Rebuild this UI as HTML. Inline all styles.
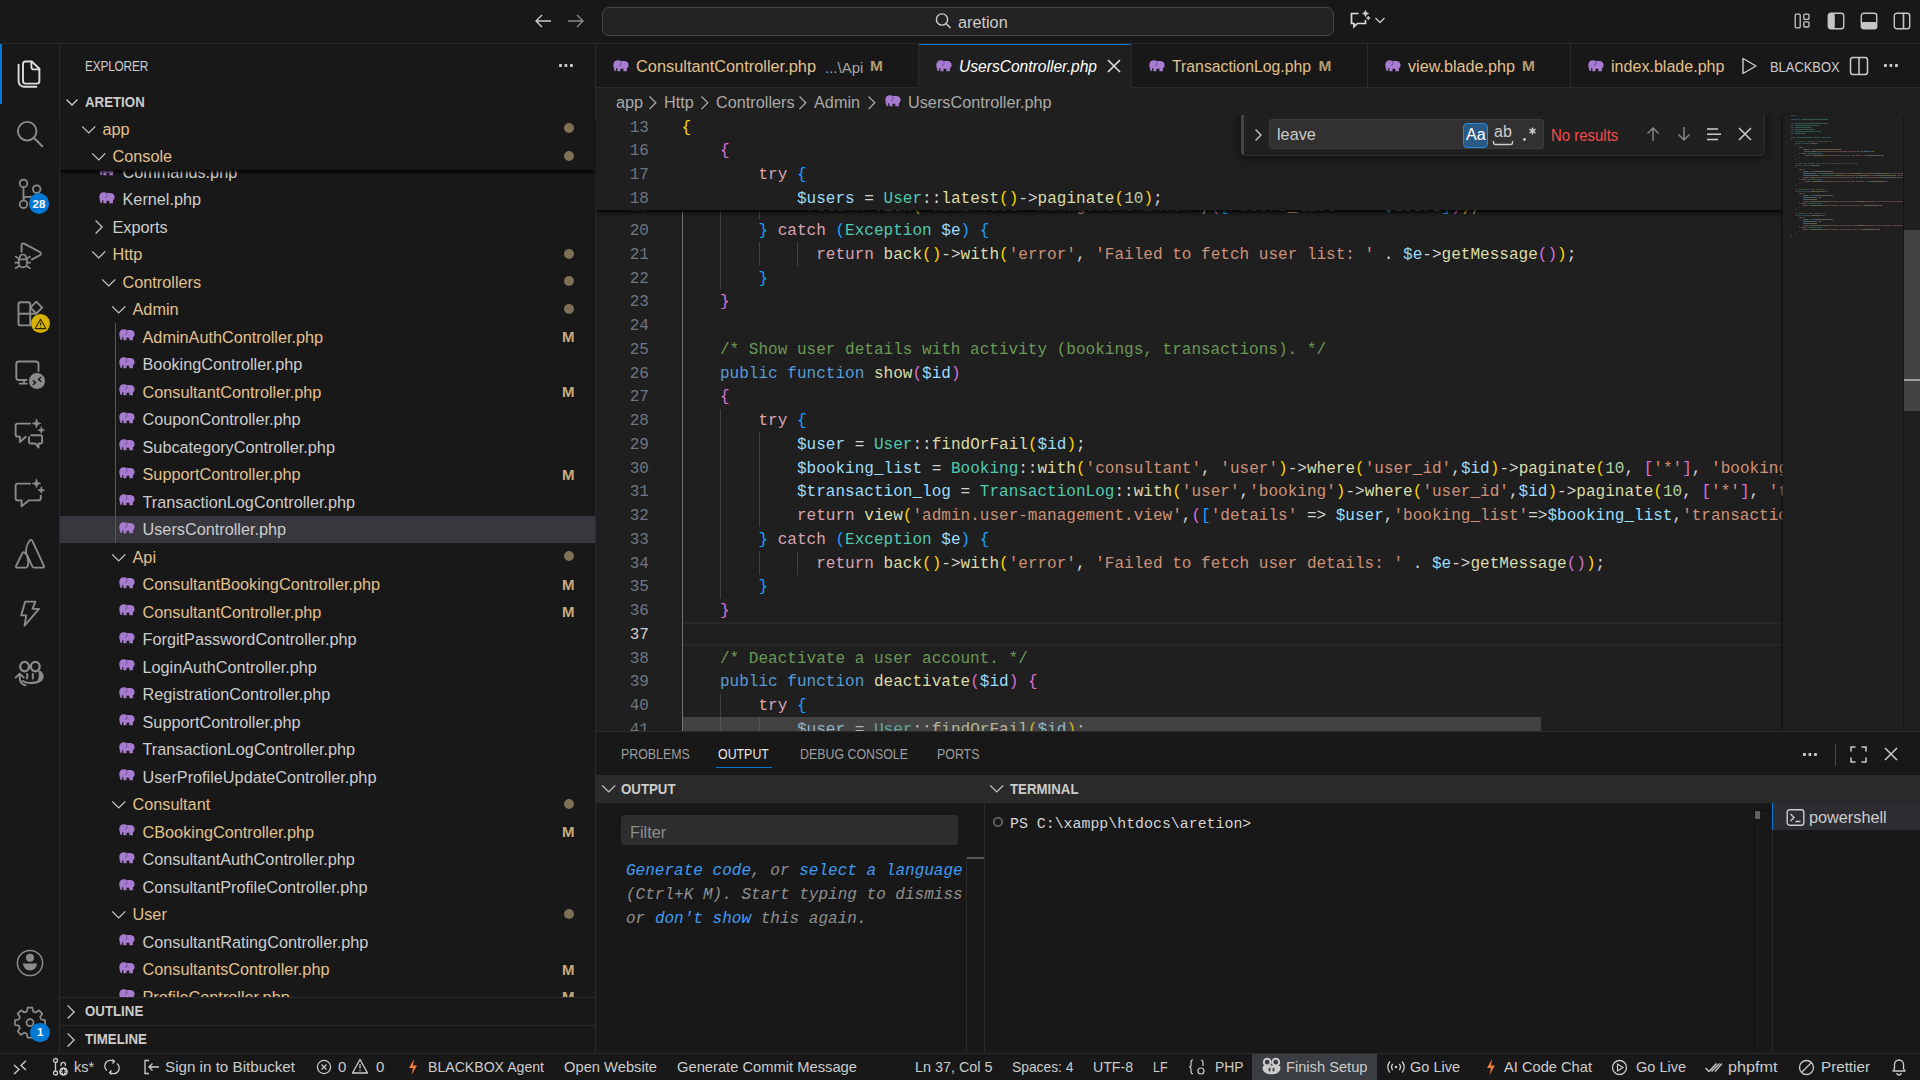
<!DOCTYPE html>
<html><head><meta charset="utf-8"><title>VS Code</title><style>
*{box-sizing:content-box}
html,body{margin:0;padding:0}
body{width:1920px;height:1080px;overflow:hidden;background:#181818;font-family:"Liberation Sans",sans-serif;color:#cccccc;position:relative}
.a{position:absolute}
.t{white-space:pre;line-height:normal}
.tr{font-size:16.25px;line-height:27.5px}
.ele{display:block}
.badge{border-radius:50%;display:flex;align-items:center;justify-content:center;font-family:"Liberation Sans",sans-serif}
.dots3{width:14px;height:3px;background:radial-gradient(circle at 1.5px 1.5px,#cccccc 1.4px,transparent 1.6px) 0 0/5.5px 3px repeat-x}
.ln{left:596px;width:53px;text-align:right;font-family:"Liberation Mono",monospace;font-size:16.04px;line-height:23.75px;white-space:pre}
.code{font-family:"Liberation Mono",monospace;font-size:16.04px;line-height:23.75px;white-space:pre;color:#d4d4d4}
.it{font-style:italic}
.ptab{font-size:13.75px;transform:scaleX(0.9);transform-origin:left}
.sbt{font-size:15px}
</style></head><body>
<div class="a" style="left:0;top:0;width:1920px;height:43px;background:#181818;border-bottom:1px solid #2b2b2b"></div>
<svg class="a" style="left:533px;top:12px" width="20" height="18" viewBox="0 0 20 18"><path d="M18 9H3M9 3L3 9l6 6" fill="none" stroke="#cccccc" stroke-width="1.4"/></svg>
<svg class="a" style="left:566px;top:12px" width="20" height="18" viewBox="0 0 20 18"><path d="M2 9h15M11 3l6 6-6 6" fill="none" stroke="#8a8a8a" stroke-width="1.4"/></svg>
<div class="a" style="left:602px;top:7px;width:730px;height:27px;border:1px solid #464646;border-radius:7px;background:#232323"></div>
<svg class="a" style="left:934px;top:12px" width="18" height="18" viewBox="0 0 18 18"><circle cx="8" cy="7.5" r="5.6" fill="none" stroke="#cccccc" stroke-width="1.4"/><path d="M12 11.5l4.5 4.5" stroke="#cccccc" stroke-width="1.5"/></svg>
<div class="a t" style="left:958px;top:13px;font-size:16.25px;color:#cccccc">aretion</div>
<svg class="a" style="left:1348px;top:9px" width="24" height="24" viewBox="0 0 24 24"><path d="M10.5 4.5H3.5v10h2.5v3.2l3.4-3.2h8.1v-3.5" fill="none" stroke="#dddddd" stroke-width="1.7"/><path d="M17.5 1.5l0.9 2.1 2.1 0.9-2.1 0.9-0.9 2.1-0.9-2.1-2.1-0.9 2.1-0.9z M20.3 7l0.6 1.4 1.4 0.6-1.4 0.6-0.6 1.4-0.6-1.4-1.4-0.6 1.4-0.6z" fill="#cccccc" stroke="#cccccc" stroke-width="0.8"/></svg>
<svg class="a" style="left:1374px;top:15px" width="12" height="10" viewBox="0 0 12 10"><path d="M1.5 3l4.5 4.5L10.5 3" fill="none" stroke="#cccccc" stroke-width="1.3"/></svg>
<svg class="a" style="left:1794px;top:13px" width="18" height="16" viewBox="0 0 18 16"><rect x="1.2" y="1.2" width="5" height="13.6" rx="1" fill="none" stroke="#c5c5c5" stroke-width="1.3"/><rect x="9.8" y="1.2" width="5.2" height="5.2" rx="1" fill="none" stroke="#c5c5c5" stroke-width="1.3"/><rect x="9.8" y="8.8" width="5.2" height="5.2" rx="1" fill="none" stroke="#c5c5c5" stroke-width="1.3"/></svg>
<svg class="a" style="left:1827px;top:12px" width="18" height="18" viewBox="0 0 18 18"><rect x="1.3" y="1.3" width="15.4" height="15.4" rx="2.5" fill="none" stroke="#c5c5c5" stroke-width="1.4"/><rect x="1.3" y="1.3" width="6.5" height="15.4" rx="2" fill="#c5c5c5"/></svg>
<svg class="a" style="left:1860px;top:12px" width="18" height="18" viewBox="0 0 18 18"><rect x="1.3" y="1.3" width="15.4" height="15.4" rx="2.5" fill="none" stroke="#c5c5c5" stroke-width="1.4"/><rect x="1.3" y="10" width="15.4" height="6.7" rx="2" fill="#c5c5c5"/></svg>
<svg class="a" style="left:1893px;top:12px" width="18" height="18" viewBox="0 0 18 18"><rect x="1.3" y="1.3" width="15.4" height="15.4" rx="2.5" fill="none" stroke="#c5c5c5" stroke-width="1.4"/><path d="M10.5 1.3v15.4" stroke="#c5c5c5" stroke-width="1.6"/></svg>
<div class="a" style="left:0;top:44px;width:59px;height:1009px;background:#181818;border-right:1px solid #2b2b2b"></div>
<div class="a" style="left:0;top:44px;width:2px;height:60px;background:#0078d4"></div>
<svg class="a" style="left:10px;top:55px" width="40" height="40" viewBox="0 0 40 40" fill="none" stroke-linecap="round" stroke-linejoin="round"><path d="M15 6.5H21.8L29.4 13.8V26A2.6 2.6 0 0 1 26.8 28.6H15.6A2.6 2.6 0 0 1 13 26V9A2.5 2.5 0 0 1 15 6.5Z" stroke="#dcdcdc" stroke-width="1.9"/><path d="M21.4 6.8V12.2A2.2 2.2 0 0 0 23.6 14.4H29.2" stroke="#dcdcdc" stroke-width="1.9"/><path d="M8.6 9.6V26.2A5.6 5.6 0 0 0 14.2 31.8H26.4" stroke="#dcdcdc" stroke-width="1.9"/></svg>
<svg class="a" style="left:10px;top:115px" width="40" height="40" viewBox="0 0 40 40" fill="none" stroke-linecap="round" stroke-linejoin="round"><circle cx="17.2" cy="16.2" r="9.3" stroke="#8b8b8b" stroke-width="1.9"/><path d="M24 23L32.3 31.3" stroke="#8b8b8b" stroke-width="2"/></svg>
<svg class="a" style="left:10px;top:175px" width="40" height="40" viewBox="0 0 40 40" fill="none" stroke-linecap="round" stroke-linejoin="round"><circle cx="13.5" cy="8.4" r="3.8" stroke="#8b8b8b" stroke-width="1.8"/><circle cx="26.7" cy="14.1" r="3.8" stroke="#8b8b8b" stroke-width="1.8"/><circle cx="13.5" cy="29.2" r="3.8" stroke="#8b8b8b" stroke-width="1.8"/><path d="M13.5 12.2V25.4M13.5 24.5C13.5 22.6 14.8 21.8 16.8 21.8H21" stroke="#8b8b8b" stroke-width="1.8"/></svg>
<svg class="a" style="left:10px;top:235px" width="40" height="40" viewBox="0 0 40 40" fill="none" stroke-linecap="round" stroke-linejoin="round"><path d="M11.6 16.8V10.4C11.6 8.6 12.8 8 14.2 8.7L29.8 17C31.2 17.8 31.2 19.4 29.8 20.2L21.8 24.6" stroke="#8b8b8b" stroke-width="1.9"/><path d="M8.7 24.3H17M9.8 22.6A3.1 3.1 0 0 1 16 22.6M8.8 24.5V28.3A4.1 4.1 0 0 0 17 28.3V24.5M5.6 21.6L8.7 23.4M5.3 27.7H8.7M5.6 33.2L9.2 31M20 21.6L17 23.4M20.2 27.7H17M20 33.2L16.6 31" stroke="#8b8b8b" stroke-width="1.7"/></svg>
<svg class="a" style="left:10px;top:295px" width="40" height="40" viewBox="0 0 40 40" fill="none" stroke-linecap="round" stroke-linejoin="round"><path d="M10.5 7.2H18.2A2 2 0 0 1 20.2 9.2V30.4H10.5A2 2 0 0 1 8.5 28.4V9.2A2 2 0 0 1 10.5 7.2ZM8.5 18.8H26M20.2 18.8V30.4" stroke="#8b8b8b" stroke-width="1.9"/><path d="M26.3 6.6L32.2 12.6L26.3 18.5L20.4 12.6Z" stroke="#8b8b8b" stroke-width="1.9"/></svg>
<svg class="a" style="left:10px;top:355px" width="40" height="40" viewBox="0 0 40 40" fill="none" stroke-linecap="round" stroke-linejoin="round"><path d="M16.5 25H8.8A2.5 2.5 0 0 1 6.3 22.5V9A2.5 2.5 0 0 1 8.8 6.5H26A2.5 2.5 0 0 1 28.5 9V16M14 25.2V28.6M9.6 28.6H17" stroke="#8b8b8b" stroke-width="1.9"/></svg>
<svg class="a" style="left:10px;top:415px" width="40" height="40" viewBox="0 0 40 40" fill="none" stroke-linecap="round" stroke-linejoin="round"><path d="M20.2 8.6H7.8A2.2 2.2 0 0 0 5.6 10.8V19.4A2.2 2.2 0 0 0 7.8 21.6H9.9V27L15.8 21.8" stroke="#8b8b8b" stroke-width="1.9"/><path d="M21.2 20.3H30.6A1.5 1.5 0 0 1 32.1 21.8V27A1.5 1.5 0 0 1 30.6 28.5H28.5V32.6L25.4 28.5H20.5A1.5 1.5 0 0 1 19 27V22.3" stroke="#8b8b8b" stroke-width="1.9"/><path d="M26.5 4.2L27.6 7.4L30.8 8.5L27.6 9.6L26.5 12.8L25.4 9.6L22.2 8.5L25.4 7.4ZM31.3 11.9L32.1 14.3L34.5 15.2L32.1 16L31.3 18.4L30.5 16L28.1 15.2L30.5 14.3Z" fill="#8b8b8b" stroke="#8b8b8b" stroke-width="0.8"/></svg>
<svg class="a" style="left:10px;top:475px" width="40" height="40" viewBox="0 0 40 40" fill="none" stroke-linecap="round" stroke-linejoin="round"><path d="M20.2 8.6H7.8A2.2 2.2 0 0 0 5.6 10.8V23.2A2.2 2.2 0 0 0 7.8 25.4H11.6V31.2L18.6 25.4H28.6A2.2 2.2 0 0 0 30.8 23.2V20.6" stroke="#8b8b8b" stroke-width="1.9"/><path d="M26.5 4.2L27.6 7.4L30.8 8.5L27.6 9.6L26.5 12.8L25.4 9.6L22.2 8.5L25.4 7.4ZM31.3 11.9L32.1 14.3L34.5 15.2L32.1 16L31.3 18.4L30.5 16L28.1 15.2L30.5 14.3Z" fill="#8b8b8b" stroke="#8b8b8b" stroke-width="0.8"/></svg>
<svg class="a" style="left:10px;top:535px" width="40" height="40" viewBox="0 0 40 40" fill="none" stroke-linecap="round" stroke-linejoin="round"><path d="M20 5.2C21.2 4.4 22 5.2 22.6 6.4L34 31C34.4 32 33.8 32.6 32.8 32.6H24C23.2 32.6 22.7 32.2 22.3 31.4L17.3 20.4M20 5.2C16.2 10 15 16.5 17.5 22.8C18.6 25.8 18.8 28.6 17.6 31.4C17.2 32.2 16.6 32.6 15.8 32.6H7C6 32.6 5.5 31.8 6 31L12.5 18C13.2 16.8 14.2 16.8 14.9 18L17.3 20.4" stroke="#8b8b8b" stroke-width="1.8"/></svg>
<svg class="a" style="left:10px;top:595px" width="40" height="40" viewBox="0 0 40 40" fill="none" stroke-linecap="round" stroke-linejoin="round"><path d="M15.2 6.6H25.4L22.6 13.9H29L14.6 30.6L16.2 20.4H11.2Z" stroke="#8b8b8b" stroke-width="1.9"/></svg>
<svg class="a" style="left:10px;top:655px" width="40" height="40" viewBox="0 0 40 40" fill="none" stroke-linecap="round" stroke-linejoin="round"><ellipse cx="14.6" cy="11.6" rx="4.4" ry="4.7" stroke="#8b8b8b" stroke-width="2.3"/><ellipse cx="25.3" cy="11.6" rx="4.4" ry="4.7" stroke="#8b8b8b" stroke-width="2.3"/><path d="M12.8 26C15.5 27.8 20.5 28.4 25 27.6C29.5 26.8 32.6 24.4 32.6 21.2C32.6 19.2 31.4 17.6 29.6 16.6" stroke="#8b8b8b" stroke-width="2.1"/><path d="M28.6 16.4C31.6 17.2 33.2 19 33.2 21.3C33.2 24.6 30.2 26.9 25.6 27.7C28.2 25.6 29.4 22 28.6 16.4Z" fill="#8b8b8b" stroke="none"/><path d="M17.2 19V23.4M22.8 19V23.4" stroke="#8b8b8b" stroke-width="2"/><path d="M15.6 30.4C11.6 29.6 9.7 26.6 9.7 22.6V18.8M5.6 22.6L9.7 18.6L13.8 22.6" stroke="#8b8b8b" stroke-width="1.9"/></svg>
<svg class="a" style="left:10px;top:943px" width="40" height="40" viewBox="0 0 40 40" fill="none" stroke-linecap="round" stroke-linejoin="round"><circle cx="20" cy="20" r="12.6" stroke="#8b8b8b" stroke-width="1.5"/><circle cx="20" cy="14.8" r="4" fill="#8b8b8b" stroke="none"/><path d="M13 20.6H27A7 7 0 0 1 13 20.6Z" fill="#8b8b8b" stroke="none"/></svg>
<svg class="a" style="left:10px;top:1003px" width="40" height="40" viewBox="0 0 40 40" fill="none" stroke-linecap="round" stroke-linejoin="round"><path d="M17.6 4.6H22.4L23.1 8.4L25.7 9.5L28.9 7.3L32.3 10.7L30.1 13.9L31.2 16.5L35 17.2V22L31.2 22.7L30.1 25.3L32.3 28.5L28.9 31.9L25.7 29.7L23.1 30.8L22.4 34.6H17.6L16.9 30.8L14.3 29.7L11.1 31.9L7.7 28.5L9.9 25.3L8.8 22.7L5 22V17.2L8.8 16.5L9.9 13.9L7.7 10.7L11.1 7.3L14.3 9.5L16.9 8.4Z" stroke="#8b8b8b" stroke-width="1.7"/><circle cx="20" cy="19.6" r="3.5" stroke="#8b8b8b" stroke-width="1.7"/></svg>
<div class="a badge" style="left:28.5px;top:193.3px;width:20.8px;height:20.8px;background:#0078d4;color:#fff;font-weight:bold;font-size:11.5px">28</div>
<div class="a badge" style="left:30.5px;top:314px;width:19px;height:19px;background:#d6b100"><svg width="13" height="12" viewBox="0 0 13 12"><path d="M6.5 1.3L11.8 10.6H1.2Z" fill="none" stroke="#2a2400" stroke-width="1.1" stroke-linejoin="round"/><path d="M6.5 4.6V7.6M6.5 8.8V9.4" stroke="#2a2400" stroke-width="1.1"/></svg></div>
<div class="a badge" style="left:28px;top:372px;width:16.4px;height:16.4px;background:#8b8b8b;border:1.5px solid #181818"><svg width="12" height="10" viewBox="0 0 12 10"><path d="M1.8 4.2L4.6 6.6L1.8 9M10.2 1L7.4 3.4L10.2 5.8" stroke="#181818" stroke-width="1.4" fill="none"/></svg></div>
<div class="a badge" style="left:30.4px;top:1022.7px;width:19.4px;height:19.4px;background:#0078d4;color:#fff;font-weight:bold;font-size:11.5px">1</div>
<div class="a" style="left:60px;top:44px;width:535px;height:1009px;background:#181818;border-right:1px solid #2b2b2b"></div>
<div class="a t" style="left:85px;top:59px;font-size:13.75px;color:#cccccc;letter-spacing:-0.2px;transform:scaleX(0.86);transform-origin:left">EXPLORER</div>
<div class="a dots3" style="left:559px;top:64px"></div>
<svg class="a chev" style="left:64px;top:94px" width="16" height="16" viewBox="0 0 16 16"><path d="M2.5 5.5l5.5 5.5 5.5-5.5" fill="none" stroke="#cccccc" stroke-width="1.3"/></svg>
<div class="a t" style="left:85px;top:94.5px;font-size:13.75px;font-weight:bold;color:#cccccc;transform:scaleX(0.965);transform-origin:left">ARETION</div>
<div class="a" style="left:0;top:115px;width:596px;height:882.5px;overflow:hidden"><div class="a" style="left:0;top:-115px;width:596px;height:1100px"><div class="a" style="left:99.0px;top:164.4px"><svg class="ele" width="16" height="12" viewBox="0 0 16 12"><path fill="#a77bd0" d="M4.8 0.2C2.2 0.2 0.3 2.2 0.3 4.8C0.3 6.6 0.8 8.2 1.2 9.4L1.4 10.4C1.5 11 2.4 11.2 2.8 10.7L3.2 10.1V8.1L4.4 8.4V11.2H7.5V8.7H10.3V11.2H13.9V8.5C15 7.8 15.6 6.5 15.6 5C15.6 2.6 13.6 1 11.2 1H8C7.2 0.5 6 0.2 4.8 0.2Z"/><path fill="none" stroke="#5f4288" stroke-width="0.8" d="M7.6 1.2C8.4 2.8 8 5 6 5.8"/></svg></div><div class="a t tr" style="left:122.5px;top:158.8px;color:#cccccc">Commands.php</div><div class="a" style="left:99.0px;top:191.9px"><svg class="ele" width="16" height="12" viewBox="0 0 16 12"><path fill="#a77bd0" d="M4.8 0.2C2.2 0.2 0.3 2.2 0.3 4.8C0.3 6.6 0.8 8.2 1.2 9.4L1.4 10.4C1.5 11 2.4 11.2 2.8 10.7L3.2 10.1V8.1L4.4 8.4V11.2H7.5V8.7H10.3V11.2H13.9V8.5C15 7.8 15.6 6.5 15.6 5C15.6 2.6 13.6 1 11.2 1H8C7.2 0.5 6 0.2 4.8 0.2Z"/><path fill="none" stroke="#5f4288" stroke-width="0.8" d="M7.6 1.2C8.4 2.8 8 5 6 5.8"/></svg></div><div class="a t tr" style="left:122.5px;top:186.3px;color:#cccccc">Kernel.php</div><svg class="a" style="left:93.7px;top:219.0px" width="10" height="16" viewBox="0 0 10 16"><path d="M1.6 1.4L8.1 7.95L1.6 14.5" fill="none" stroke="#c5c5c5" stroke-width="1.3"/></svg><div class="a t tr" style="left:112.5px;top:213.8px;color:#cccccc">Exports</div><svg class="a" style="left:90.5px;top:250.0px" width="16" height="10" viewBox="0 0 16 10"><path d="M1.2 1.4L7.75 7.9L14.3 1.4" fill="none" stroke="#c5c5c5" stroke-width="1.3"/></svg><div class="a t tr" style="left:112.5px;top:241.3px;color:#e2c08d">Http</div><div class="a" style="left:563.5px;top:248.5px;width:10px;height:10px;border-radius:50%;background:#7f6f54"></div><svg class="a" style="left:100.5px;top:277.5px" width="16" height="10" viewBox="0 0 16 10"><path d="M1.2 1.4L7.75 7.9L14.3 1.4" fill="none" stroke="#c5c5c5" stroke-width="1.3"/></svg><div class="a t tr" style="left:122.5px;top:268.8px;color:#e2c08d">Controllers</div><div class="a" style="left:563.5px;top:276.0px;width:10px;height:10px;border-radius:50%;background:#7f6f54"></div><svg class="a" style="left:110.5px;top:305.0px" width="16" height="10" viewBox="0 0 16 10"><path d="M1.2 1.4L7.75 7.9L14.3 1.4" fill="none" stroke="#c5c5c5" stroke-width="1.3"/></svg><div class="a t tr" style="left:132.5px;top:296.3px;color:#e2c08d">Admin</div><div class="a" style="left:563.5px;top:303.5px;width:10px;height:10px;border-radius:50%;background:#7f6f54"></div><div class="a" style="left:119.0px;top:329.4px"><svg class="ele" width="16" height="12" viewBox="0 0 16 12"><path fill="#a77bd0" d="M4.8 0.2C2.2 0.2 0.3 2.2 0.3 4.8C0.3 6.6 0.8 8.2 1.2 9.4L1.4 10.4C1.5 11 2.4 11.2 2.8 10.7L3.2 10.1V8.1L4.4 8.4V11.2H7.5V8.7H10.3V11.2H13.9V8.5C15 7.8 15.6 6.5 15.6 5C15.6 2.6 13.6 1 11.2 1H8C7.2 0.5 6 0.2 4.8 0.2Z"/><path fill="none" stroke="#5f4288" stroke-width="0.8" d="M7.6 1.2C8.4 2.8 8 5 6 5.8"/></svg></div><div class="a t tr" style="left:142.5px;top:323.8px;color:#e2c08d">AdminAuthController.php</div><div class="a t tr" style="left:562px;top:323.0px;color:#c9ab7c;font-weight:bold;font-size:15px">M</div><div class="a" style="left:119.0px;top:356.9px"><svg class="ele" width="16" height="12" viewBox="0 0 16 12"><path fill="#a77bd0" d="M4.8 0.2C2.2 0.2 0.3 2.2 0.3 4.8C0.3 6.6 0.8 8.2 1.2 9.4L1.4 10.4C1.5 11 2.4 11.2 2.8 10.7L3.2 10.1V8.1L4.4 8.4V11.2H7.5V8.7H10.3V11.2H13.9V8.5C15 7.8 15.6 6.5 15.6 5C15.6 2.6 13.6 1 11.2 1H8C7.2 0.5 6 0.2 4.8 0.2Z"/><path fill="none" stroke="#5f4288" stroke-width="0.8" d="M7.6 1.2C8.4 2.8 8 5 6 5.8"/></svg></div><div class="a t tr" style="left:142.5px;top:351.3px;color:#cccccc">BookingController.php</div><div class="a" style="left:119.0px;top:384.4px"><svg class="ele" width="16" height="12" viewBox="0 0 16 12"><path fill="#a77bd0" d="M4.8 0.2C2.2 0.2 0.3 2.2 0.3 4.8C0.3 6.6 0.8 8.2 1.2 9.4L1.4 10.4C1.5 11 2.4 11.2 2.8 10.7L3.2 10.1V8.1L4.4 8.4V11.2H7.5V8.7H10.3V11.2H13.9V8.5C15 7.8 15.6 6.5 15.6 5C15.6 2.6 13.6 1 11.2 1H8C7.2 0.5 6 0.2 4.8 0.2Z"/><path fill="none" stroke="#5f4288" stroke-width="0.8" d="M7.6 1.2C8.4 2.8 8 5 6 5.8"/></svg></div><div class="a t tr" style="left:142.5px;top:378.8px;color:#e2c08d">ConsultantController.php</div><div class="a t tr" style="left:562px;top:378.0px;color:#c9ab7c;font-weight:bold;font-size:15px">M</div><div class="a" style="left:119.0px;top:411.9px"><svg class="ele" width="16" height="12" viewBox="0 0 16 12"><path fill="#a77bd0" d="M4.8 0.2C2.2 0.2 0.3 2.2 0.3 4.8C0.3 6.6 0.8 8.2 1.2 9.4L1.4 10.4C1.5 11 2.4 11.2 2.8 10.7L3.2 10.1V8.1L4.4 8.4V11.2H7.5V8.7H10.3V11.2H13.9V8.5C15 7.8 15.6 6.5 15.6 5C15.6 2.6 13.6 1 11.2 1H8C7.2 0.5 6 0.2 4.8 0.2Z"/><path fill="none" stroke="#5f4288" stroke-width="0.8" d="M7.6 1.2C8.4 2.8 8 5 6 5.8"/></svg></div><div class="a t tr" style="left:142.5px;top:406.3px;color:#cccccc">CouponController.php</div><div class="a" style="left:119.0px;top:439.4px"><svg class="ele" width="16" height="12" viewBox="0 0 16 12"><path fill="#a77bd0" d="M4.8 0.2C2.2 0.2 0.3 2.2 0.3 4.8C0.3 6.6 0.8 8.2 1.2 9.4L1.4 10.4C1.5 11 2.4 11.2 2.8 10.7L3.2 10.1V8.1L4.4 8.4V11.2H7.5V8.7H10.3V11.2H13.9V8.5C15 7.8 15.6 6.5 15.6 5C15.6 2.6 13.6 1 11.2 1H8C7.2 0.5 6 0.2 4.8 0.2Z"/><path fill="none" stroke="#5f4288" stroke-width="0.8" d="M7.6 1.2C8.4 2.8 8 5 6 5.8"/></svg></div><div class="a t tr" style="left:142.5px;top:433.8px;color:#cccccc">SubcategoryController.php</div><div class="a" style="left:119.0px;top:466.9px"><svg class="ele" width="16" height="12" viewBox="0 0 16 12"><path fill="#a77bd0" d="M4.8 0.2C2.2 0.2 0.3 2.2 0.3 4.8C0.3 6.6 0.8 8.2 1.2 9.4L1.4 10.4C1.5 11 2.4 11.2 2.8 10.7L3.2 10.1V8.1L4.4 8.4V11.2H7.5V8.7H10.3V11.2H13.9V8.5C15 7.8 15.6 6.5 15.6 5C15.6 2.6 13.6 1 11.2 1H8C7.2 0.5 6 0.2 4.8 0.2Z"/><path fill="none" stroke="#5f4288" stroke-width="0.8" d="M7.6 1.2C8.4 2.8 8 5 6 5.8"/></svg></div><div class="a t tr" style="left:142.5px;top:461.3px;color:#e2c08d">SupportController.php</div><div class="a t tr" style="left:562px;top:460.5px;color:#c9ab7c;font-weight:bold;font-size:15px">M</div><div class="a" style="left:119.0px;top:494.4px"><svg class="ele" width="16" height="12" viewBox="0 0 16 12"><path fill="#a77bd0" d="M4.8 0.2C2.2 0.2 0.3 2.2 0.3 4.8C0.3 6.6 0.8 8.2 1.2 9.4L1.4 10.4C1.5 11 2.4 11.2 2.8 10.7L3.2 10.1V8.1L4.4 8.4V11.2H7.5V8.7H10.3V11.2H13.9V8.5C15 7.8 15.6 6.5 15.6 5C15.6 2.6 13.6 1 11.2 1H8C7.2 0.5 6 0.2 4.8 0.2Z"/><path fill="none" stroke="#5f4288" stroke-width="0.8" d="M7.6 1.2C8.4 2.8 8 5 6 5.8"/></svg></div><div class="a t tr" style="left:142.5px;top:488.8px;color:#cccccc">TransactionLogController.php</div><div class="a" style="left:60px;top:515.5px;width:535px;height:27.5px;background:#37373d"></div><div class="a" style="left:119.0px;top:521.9px"><svg class="ele" width="16" height="12" viewBox="0 0 16 12"><path fill="#a77bd0" d="M4.8 0.2C2.2 0.2 0.3 2.2 0.3 4.8C0.3 6.6 0.8 8.2 1.2 9.4L1.4 10.4C1.5 11 2.4 11.2 2.8 10.7L3.2 10.1V8.1L4.4 8.4V11.2H7.5V8.7H10.3V11.2H13.9V8.5C15 7.8 15.6 6.5 15.6 5C15.6 2.6 13.6 1 11.2 1H8C7.2 0.5 6 0.2 4.8 0.2Z"/><path fill="none" stroke="#5f4288" stroke-width="0.8" d="M7.6 1.2C8.4 2.8 8 5 6 5.8"/></svg></div><div class="a t tr" style="left:142.5px;top:516.3px;color:#cccccc">UsersController.php</div><svg class="a" style="left:110.5px;top:552.5px" width="16" height="10" viewBox="0 0 16 10"><path d="M1.2 1.4L7.75 7.9L14.3 1.4" fill="none" stroke="#c5c5c5" stroke-width="1.3"/></svg><div class="a t tr" style="left:132.5px;top:543.8px;color:#e2c08d">Api</div><div class="a" style="left:563.5px;top:551.0px;width:10px;height:10px;border-radius:50%;background:#7f6f54"></div><div class="a" style="left:119.0px;top:576.9px"><svg class="ele" width="16" height="12" viewBox="0 0 16 12"><path fill="#a77bd0" d="M4.8 0.2C2.2 0.2 0.3 2.2 0.3 4.8C0.3 6.6 0.8 8.2 1.2 9.4L1.4 10.4C1.5 11 2.4 11.2 2.8 10.7L3.2 10.1V8.1L4.4 8.4V11.2H7.5V8.7H10.3V11.2H13.9V8.5C15 7.8 15.6 6.5 15.6 5C15.6 2.6 13.6 1 11.2 1H8C7.2 0.5 6 0.2 4.8 0.2Z"/><path fill="none" stroke="#5f4288" stroke-width="0.8" d="M7.6 1.2C8.4 2.8 8 5 6 5.8"/></svg></div><div class="a t tr" style="left:142.5px;top:571.3px;color:#e2c08d">ConsultantBookingController.php</div><div class="a t tr" style="left:562px;top:570.5px;color:#c9ab7c;font-weight:bold;font-size:15px">M</div><div class="a" style="left:119.0px;top:604.4px"><svg class="ele" width="16" height="12" viewBox="0 0 16 12"><path fill="#a77bd0" d="M4.8 0.2C2.2 0.2 0.3 2.2 0.3 4.8C0.3 6.6 0.8 8.2 1.2 9.4L1.4 10.4C1.5 11 2.4 11.2 2.8 10.7L3.2 10.1V8.1L4.4 8.4V11.2H7.5V8.7H10.3V11.2H13.9V8.5C15 7.8 15.6 6.5 15.6 5C15.6 2.6 13.6 1 11.2 1H8C7.2 0.5 6 0.2 4.8 0.2Z"/><path fill="none" stroke="#5f4288" stroke-width="0.8" d="M7.6 1.2C8.4 2.8 8 5 6 5.8"/></svg></div><div class="a t tr" style="left:142.5px;top:598.8px;color:#e2c08d">ConsultantController.php</div><div class="a t tr" style="left:562px;top:598.0px;color:#c9ab7c;font-weight:bold;font-size:15px">M</div><div class="a" style="left:119.0px;top:631.9px"><svg class="ele" width="16" height="12" viewBox="0 0 16 12"><path fill="#a77bd0" d="M4.8 0.2C2.2 0.2 0.3 2.2 0.3 4.8C0.3 6.6 0.8 8.2 1.2 9.4L1.4 10.4C1.5 11 2.4 11.2 2.8 10.7L3.2 10.1V8.1L4.4 8.4V11.2H7.5V8.7H10.3V11.2H13.9V8.5C15 7.8 15.6 6.5 15.6 5C15.6 2.6 13.6 1 11.2 1H8C7.2 0.5 6 0.2 4.8 0.2Z"/><path fill="none" stroke="#5f4288" stroke-width="0.8" d="M7.6 1.2C8.4 2.8 8 5 6 5.8"/></svg></div><div class="a t tr" style="left:142.5px;top:626.3px;color:#cccccc">ForgitPasswordController.php</div><div class="a" style="left:119.0px;top:659.4px"><svg class="ele" width="16" height="12" viewBox="0 0 16 12"><path fill="#a77bd0" d="M4.8 0.2C2.2 0.2 0.3 2.2 0.3 4.8C0.3 6.6 0.8 8.2 1.2 9.4L1.4 10.4C1.5 11 2.4 11.2 2.8 10.7L3.2 10.1V8.1L4.4 8.4V11.2H7.5V8.7H10.3V11.2H13.9V8.5C15 7.8 15.6 6.5 15.6 5C15.6 2.6 13.6 1 11.2 1H8C7.2 0.5 6 0.2 4.8 0.2Z"/><path fill="none" stroke="#5f4288" stroke-width="0.8" d="M7.6 1.2C8.4 2.8 8 5 6 5.8"/></svg></div><div class="a t tr" style="left:142.5px;top:653.8px;color:#cccccc">LoginAuthController.php</div><div class="a" style="left:119.0px;top:686.9px"><svg class="ele" width="16" height="12" viewBox="0 0 16 12"><path fill="#a77bd0" d="M4.8 0.2C2.2 0.2 0.3 2.2 0.3 4.8C0.3 6.6 0.8 8.2 1.2 9.4L1.4 10.4C1.5 11 2.4 11.2 2.8 10.7L3.2 10.1V8.1L4.4 8.4V11.2H7.5V8.7H10.3V11.2H13.9V8.5C15 7.8 15.6 6.5 15.6 5C15.6 2.6 13.6 1 11.2 1H8C7.2 0.5 6 0.2 4.8 0.2Z"/><path fill="none" stroke="#5f4288" stroke-width="0.8" d="M7.6 1.2C8.4 2.8 8 5 6 5.8"/></svg></div><div class="a t tr" style="left:142.5px;top:681.3px;color:#cccccc">RegistrationController.php</div><div class="a" style="left:119.0px;top:714.4px"><svg class="ele" width="16" height="12" viewBox="0 0 16 12"><path fill="#a77bd0" d="M4.8 0.2C2.2 0.2 0.3 2.2 0.3 4.8C0.3 6.6 0.8 8.2 1.2 9.4L1.4 10.4C1.5 11 2.4 11.2 2.8 10.7L3.2 10.1V8.1L4.4 8.4V11.2H7.5V8.7H10.3V11.2H13.9V8.5C15 7.8 15.6 6.5 15.6 5C15.6 2.6 13.6 1 11.2 1H8C7.2 0.5 6 0.2 4.8 0.2Z"/><path fill="none" stroke="#5f4288" stroke-width="0.8" d="M7.6 1.2C8.4 2.8 8 5 6 5.8"/></svg></div><div class="a t tr" style="left:142.5px;top:708.8px;color:#cccccc">SupportController.php</div><div class="a" style="left:119.0px;top:741.9px"><svg class="ele" width="16" height="12" viewBox="0 0 16 12"><path fill="#a77bd0" d="M4.8 0.2C2.2 0.2 0.3 2.2 0.3 4.8C0.3 6.6 0.8 8.2 1.2 9.4L1.4 10.4C1.5 11 2.4 11.2 2.8 10.7L3.2 10.1V8.1L4.4 8.4V11.2H7.5V8.7H10.3V11.2H13.9V8.5C15 7.8 15.6 6.5 15.6 5C15.6 2.6 13.6 1 11.2 1H8C7.2 0.5 6 0.2 4.8 0.2Z"/><path fill="none" stroke="#5f4288" stroke-width="0.8" d="M7.6 1.2C8.4 2.8 8 5 6 5.8"/></svg></div><div class="a t tr" style="left:142.5px;top:736.3px;color:#cccccc">TransactionLogController.php</div><div class="a" style="left:119.0px;top:769.4px"><svg class="ele" width="16" height="12" viewBox="0 0 16 12"><path fill="#a77bd0" d="M4.8 0.2C2.2 0.2 0.3 2.2 0.3 4.8C0.3 6.6 0.8 8.2 1.2 9.4L1.4 10.4C1.5 11 2.4 11.2 2.8 10.7L3.2 10.1V8.1L4.4 8.4V11.2H7.5V8.7H10.3V11.2H13.9V8.5C15 7.8 15.6 6.5 15.6 5C15.6 2.6 13.6 1 11.2 1H8C7.2 0.5 6 0.2 4.8 0.2Z"/><path fill="none" stroke="#5f4288" stroke-width="0.8" d="M7.6 1.2C8.4 2.8 8 5 6 5.8"/></svg></div><div class="a t tr" style="left:142.5px;top:763.8px;color:#cccccc">UserProfileUpdateController.php</div><svg class="a" style="left:110.5px;top:800.0px" width="16" height="10" viewBox="0 0 16 10"><path d="M1.2 1.4L7.75 7.9L14.3 1.4" fill="none" stroke="#c5c5c5" stroke-width="1.3"/></svg><div class="a t tr" style="left:132.5px;top:791.3px;color:#e2c08d">Consultant</div><div class="a" style="left:563.5px;top:798.5px;width:10px;height:10px;border-radius:50%;background:#7f6f54"></div><div class="a" style="left:119.0px;top:824.4px"><svg class="ele" width="16" height="12" viewBox="0 0 16 12"><path fill="#a77bd0" d="M4.8 0.2C2.2 0.2 0.3 2.2 0.3 4.8C0.3 6.6 0.8 8.2 1.2 9.4L1.4 10.4C1.5 11 2.4 11.2 2.8 10.7L3.2 10.1V8.1L4.4 8.4V11.2H7.5V8.7H10.3V11.2H13.9V8.5C15 7.8 15.6 6.5 15.6 5C15.6 2.6 13.6 1 11.2 1H8C7.2 0.5 6 0.2 4.8 0.2Z"/><path fill="none" stroke="#5f4288" stroke-width="0.8" d="M7.6 1.2C8.4 2.8 8 5 6 5.8"/></svg></div><div class="a t tr" style="left:142.5px;top:818.8px;color:#e2c08d">CBookingController.php</div><div class="a t tr" style="left:562px;top:818.0px;color:#c9ab7c;font-weight:bold;font-size:15px">M</div><div class="a" style="left:119.0px;top:851.9px"><svg class="ele" width="16" height="12" viewBox="0 0 16 12"><path fill="#a77bd0" d="M4.8 0.2C2.2 0.2 0.3 2.2 0.3 4.8C0.3 6.6 0.8 8.2 1.2 9.4L1.4 10.4C1.5 11 2.4 11.2 2.8 10.7L3.2 10.1V8.1L4.4 8.4V11.2H7.5V8.7H10.3V11.2H13.9V8.5C15 7.8 15.6 6.5 15.6 5C15.6 2.6 13.6 1 11.2 1H8C7.2 0.5 6 0.2 4.8 0.2Z"/><path fill="none" stroke="#5f4288" stroke-width="0.8" d="M7.6 1.2C8.4 2.8 8 5 6 5.8"/></svg></div><div class="a t tr" style="left:142.5px;top:846.3px;color:#cccccc">ConsultantAuthController.php</div><div class="a" style="left:119.0px;top:879.4px"><svg class="ele" width="16" height="12" viewBox="0 0 16 12"><path fill="#a77bd0" d="M4.8 0.2C2.2 0.2 0.3 2.2 0.3 4.8C0.3 6.6 0.8 8.2 1.2 9.4L1.4 10.4C1.5 11 2.4 11.2 2.8 10.7L3.2 10.1V8.1L4.4 8.4V11.2H7.5V8.7H10.3V11.2H13.9V8.5C15 7.8 15.6 6.5 15.6 5C15.6 2.6 13.6 1 11.2 1H8C7.2 0.5 6 0.2 4.8 0.2Z"/><path fill="none" stroke="#5f4288" stroke-width="0.8" d="M7.6 1.2C8.4 2.8 8 5 6 5.8"/></svg></div><div class="a t tr" style="left:142.5px;top:873.8px;color:#cccccc">ConsultantProfileController.php</div><svg class="a" style="left:110.5px;top:910.0px" width="16" height="10" viewBox="0 0 16 10"><path d="M1.2 1.4L7.75 7.9L14.3 1.4" fill="none" stroke="#c5c5c5" stroke-width="1.3"/></svg><div class="a t tr" style="left:132.5px;top:901.3px;color:#e2c08d">User</div><div class="a" style="left:563.5px;top:908.5px;width:10px;height:10px;border-radius:50%;background:#7f6f54"></div><div class="a" style="left:119.0px;top:934.4px"><svg class="ele" width="16" height="12" viewBox="0 0 16 12"><path fill="#a77bd0" d="M4.8 0.2C2.2 0.2 0.3 2.2 0.3 4.8C0.3 6.6 0.8 8.2 1.2 9.4L1.4 10.4C1.5 11 2.4 11.2 2.8 10.7L3.2 10.1V8.1L4.4 8.4V11.2H7.5V8.7H10.3V11.2H13.9V8.5C15 7.8 15.6 6.5 15.6 5C15.6 2.6 13.6 1 11.2 1H8C7.2 0.5 6 0.2 4.8 0.2Z"/><path fill="none" stroke="#5f4288" stroke-width="0.8" d="M7.6 1.2C8.4 2.8 8 5 6 5.8"/></svg></div><div class="a t tr" style="left:142.5px;top:928.8px;color:#cccccc">ConsultantRatingController.php</div><div class="a" style="left:119.0px;top:961.9px"><svg class="ele" width="16" height="12" viewBox="0 0 16 12"><path fill="#a77bd0" d="M4.8 0.2C2.2 0.2 0.3 2.2 0.3 4.8C0.3 6.6 0.8 8.2 1.2 9.4L1.4 10.4C1.5 11 2.4 11.2 2.8 10.7L3.2 10.1V8.1L4.4 8.4V11.2H7.5V8.7H10.3V11.2H13.9V8.5C15 7.8 15.6 6.5 15.6 5C15.6 2.6 13.6 1 11.2 1H8C7.2 0.5 6 0.2 4.8 0.2Z"/><path fill="none" stroke="#5f4288" stroke-width="0.8" d="M7.6 1.2C8.4 2.8 8 5 6 5.8"/></svg></div><div class="a t tr" style="left:142.5px;top:956.3px;color:#e2c08d">ConsultantsController.php</div><div class="a t tr" style="left:562px;top:955.5px;color:#c9ab7c;font-weight:bold;font-size:15px">M</div><div class="a" style="left:119.0px;top:989.4px"><svg class="ele" width="16" height="12" viewBox="0 0 16 12"><path fill="#a77bd0" d="M4.8 0.2C2.2 0.2 0.3 2.2 0.3 4.8C0.3 6.6 0.8 8.2 1.2 9.4L1.4 10.4C1.5 11 2.4 11.2 2.8 10.7L3.2 10.1V8.1L4.4 8.4V11.2H7.5V8.7H10.3V11.2H13.9V8.5C15 7.8 15.6 6.5 15.6 5C15.6 2.6 13.6 1 11.2 1H8C7.2 0.5 6 0.2 4.8 0.2Z"/><path fill="none" stroke="#5f4288" stroke-width="0.8" d="M7.6 1.2C8.4 2.8 8 5 6 5.8"/></svg></div><div class="a t tr" style="left:142.5px;top:983.8px;color:#e2c08d">ProfileController.php</div><div class="a t tr" style="left:562px;top:983.0px;color:#c9ab7c;font-weight:bold;font-size:15px">M</div><div class="a" style="left:115px;top:323px;width:1px;height:220px;background:#585858"></div></div></div>
<div class="a" style="left:60px;top:115px;width:535px;height:55px;background:#181818;box-shadow:0 3px 3px -1px #000"></div>
<svg class="a" style="left:80.5px;top:124.5px" width="16" height="10" viewBox="0 0 16 10"><path d="M1.2 1.4L7.75 7.9L14.3 1.4" fill="none" stroke="#c5c5c5" stroke-width="1.3"/></svg><div class="a t tr" style="left:102.5px;top:115.8px;color:#e2c08d">app</div><div class="a" style="left:563.5px;top:123px;width:10px;height:10px;border-radius:50%;background:#7f6f54"></div>
<svg class="a" style="left:90.5px;top:152.0px" width="16" height="10" viewBox="0 0 16 10"><path d="M1.2 1.4L7.75 7.9L14.3 1.4" fill="none" stroke="#c5c5c5" stroke-width="1.3"/></svg><div class="a t tr" style="left:112.5px;top:143.3px;color:#e2c08d">Console</div><div class="a" style="left:563.5px;top:150.5px;width:10px;height:10px;border-radius:50%;background:#7f6f54"></div>
<div class="a" style="left:60px;top:997px;width:535px;height:27px;border-top:1px solid #2b2b2b;background:#181818"></div>
<svg class="a" style="left:66px;top:1004px" width="10" height="16" viewBox="0 0 10 16"><path d="M1.6 1.4L8.1 7.95L1.6 14.5" fill="none" stroke="#c5c5c5" stroke-width="1.3"/></svg>
<div class="a t" style="left:85px;top:1004px;font-size:13.75px;font-weight:bold;color:#cccccc;transform:scaleX(0.965);transform-origin:left">OUTLINE</div>
<div class="a" style="left:60px;top:1025px;width:535px;height:27px;border-top:1px solid #2b2b2b;background:#181818"></div>
<svg class="a" style="left:66px;top:1032px" width="10" height="16" viewBox="0 0 10 16"><path d="M1.6 1.4L8.1 7.95L1.6 14.5" fill="none" stroke="#c5c5c5" stroke-width="1.3"/></svg>
<div class="a t" style="left:85px;top:1032px;font-size:13.75px;font-weight:bold;color:#cccccc;transform:scaleX(0.965);transform-origin:left">TIMELINE</div>
<div class="a" style="left:596px;top:44px;width:1324px;height:43px;background:#181818;border-bottom:1px solid #2b2b2b"></div>
<div class="a" style="left:596px;top:44px;width:322px;height:43px;background:#181818;border-right:1px solid #2b2b2b;border-bottom:1px solid #2b2b2b;"></div><div class="a" style="left:613px;top:60px"><svg class="ele" width="16" height="12" viewBox="0 0 16 12"><path fill="#a77bd0" d="M4.8 0.2C2.2 0.2 0.3 2.2 0.3 4.8C0.3 6.6 0.8 8.2 1.2 9.4L1.4 10.4C1.5 11 2.4 11.2 2.8 10.7L3.2 10.1V8.1L4.4 8.4V11.2H7.5V8.7H10.3V11.2H13.9V8.5C15 7.8 15.6 6.5 15.6 5C15.6 2.6 13.6 1 11.2 1H8C7.2 0.5 6 0.2 4.8 0.2Z"/><path fill="none" stroke="#5f4288" stroke-width="0.8" d="M7.6 1.2C8.4 2.8 8 5 6 5.8"/></svg></div><div class="a t" style="left:636px;top:57px;font-size:16.25px;color:#e2c08d;transform:scaleX(1.0063);transform-origin:left;">ConsultantController.php</div>
<div class="a t" style="left:825px;top:59px;font-size:15px;color:#a5a5a5">...\Api</div>
<div class="a t" style="left:870px;top:56.5px;font-size:15.5px;font-weight:bold;color:#b59a70">M</div>
<div class="a" style="left:919px;top:44px;width:212px;height:44px;background:#1f1f1f;border-right:1px solid #2b2b2b;"></div><div class="a" style="left:919px;top:44px;width:212px;height:1px;background:#0078d4"></div><div class="a" style="left:936px;top:60px"><svg class="ele" width="16" height="12" viewBox="0 0 16 12"><path fill="#a77bd0" d="M4.8 0.2C2.2 0.2 0.3 2.2 0.3 4.8C0.3 6.6 0.8 8.2 1.2 9.4L1.4 10.4C1.5 11 2.4 11.2 2.8 10.7L3.2 10.1V8.1L4.4 8.4V11.2H7.5V8.7H10.3V11.2H13.9V8.5C15 7.8 15.6 6.5 15.6 5C15.6 2.6 13.6 1 11.2 1H8C7.2 0.5 6 0.2 4.8 0.2Z"/><path fill="none" stroke="#5f4288" stroke-width="0.8" d="M7.6 1.2C8.4 2.8 8 5 6 5.8"/></svg></div><div class="a t" style="left:959px;top:57px;font-size:16.25px;color:#ffffff;font-style:italic;transform:scaleX(0.9590);transform-origin:left;">UsersController.php</div>
<svg class="a" style="left:1105px;top:57px" width="18" height="18" viewBox="0 0 18 18"><path d="M3 3l12 12M15 3L3 15" stroke="#e0e0e0" stroke-width="1.6"/></svg>
<div class="a" style="left:1132px;top:44px;width:235px;height:43px;background:#181818;border-right:1px solid #2b2b2b;border-bottom:1px solid #2b2b2b;"></div><div class="a" style="left:1149px;top:60px"><svg class="ele" width="16" height="12" viewBox="0 0 16 12"><path fill="#a77bd0" d="M4.8 0.2C2.2 0.2 0.3 2.2 0.3 4.8C0.3 6.6 0.8 8.2 1.2 9.4L1.4 10.4C1.5 11 2.4 11.2 2.8 10.7L3.2 10.1V8.1L4.4 8.4V11.2H7.5V8.7H10.3V11.2H13.9V8.5C15 7.8 15.6 6.5 15.6 5C15.6 2.6 13.6 1 11.2 1H8C7.2 0.5 6 0.2 4.8 0.2Z"/><path fill="none" stroke="#5f4288" stroke-width="0.8" d="M7.6 1.2C8.4 2.8 8 5 6 5.8"/></svg></div><div class="a t" style="left:1172px;top:57px;font-size:16.25px;color:#e2c08d;transform:scaleX(0.9717);transform-origin:left;">TransactionLog.php</div>
<div class="a t" style="left:1318.5px;top:56.5px;font-size:15.5px;font-weight:bold;color:#b59a70">M</div>
<div class="a" style="left:1368px;top:44px;width:202px;height:43px;background:#181818;border-right:1px solid #2b2b2b;border-bottom:1px solid #2b2b2b;"></div><div class="a" style="left:1385px;top:60px"><svg class="ele" width="16" height="12" viewBox="0 0 16 12"><path fill="#a77bd0" d="M4.8 0.2C2.2 0.2 0.3 2.2 0.3 4.8C0.3 6.6 0.8 8.2 1.2 9.4L1.4 10.4C1.5 11 2.4 11.2 2.8 10.7L3.2 10.1V8.1L4.4 8.4V11.2H7.5V8.7H10.3V11.2H13.9V8.5C15 7.8 15.6 6.5 15.6 5C15.6 2.6 13.6 1 11.2 1H8C7.2 0.5 6 0.2 4.8 0.2Z"/><path fill="none" stroke="#5f4288" stroke-width="0.8" d="M7.6 1.2C8.4 2.8 8 5 6 5.8"/></svg></div><div class="a t" style="left:1408px;top:57px;font-size:16.25px;color:#e2c08d;transform:scaleX(0.9952);transform-origin:left;">view.blade.php</div>
<div class="a t" style="left:1522px;top:56.5px;font-size:15.5px;font-weight:bold;color:#b59a70">M</div>
<div class="a" style="left:1571px;top:44px;width:349px;height:43px;background:#181818;border-right:1px solid #2b2b2b;border-bottom:1px solid #2b2b2b;"></div><div class="a" style="left:1588px;top:60px"><svg class="ele" width="16" height="12" viewBox="0 0 16 12"><path fill="#a77bd0" d="M4.8 0.2C2.2 0.2 0.3 2.2 0.3 4.8C0.3 6.6 0.8 8.2 1.2 9.4L1.4 10.4C1.5 11 2.4 11.2 2.8 10.7L3.2 10.1V8.1L4.4 8.4V11.2H7.5V8.7H10.3V11.2H13.9V8.5C15 7.8 15.6 6.5 15.6 5C15.6 2.6 13.6 1 11.2 1H8C7.2 0.5 6 0.2 4.8 0.2Z"/><path fill="none" stroke="#5f4288" stroke-width="0.8" d="M7.6 1.2C8.4 2.8 8 5 6 5.8"/></svg></div><div class="a t" style="left:1611px;top:57px;font-size:16.25px;color:#e2c08d;transform:scaleX(0.9891);transform-origin:left;">index.blade.php</div>
<div class="a" style="left:1730px;top:44px;width:190px;height:43px;background:#181818;border-bottom:1px solid #2b2b2b"></div>
<svg class="a" style="left:1739px;top:56px" width="20" height="20" viewBox="0 0 20 20"><path d="M4 2.5l13 7.5-13 7.5z" fill="none" stroke="#cccccc" stroke-width="1.4" stroke-linejoin="round"/></svg>
<div class="a t" style="left:1770px;top:58px;font-size:15px;color:#cccccc;transform:scaleX(0.86);transform-origin:left">BLACKBOX</div>
<svg class="a" style="left:1849px;top:56px" width="20" height="20" viewBox="0 0 20 20"><rect x="1.5" y="1.5" width="17" height="17" rx="2.5" fill="none" stroke="#cccccc" stroke-width="1.5"/><path d="M10 1.5v17" stroke="#cccccc" stroke-width="1.5"/></svg>
<div class="a dots3" style="left:1884px;top:64px"></div>
<div class="a" style="left:596px;top:88px;width:1324px;height:643px;background:#1f1f1f"></div>
<div class="a t" style="left:616px;top:93px;font-size:16.25px;color:#a9a9a9">app</div>
<svg class="a" style="left:647px;top:95px" width="12" height="16" viewBox="0 0 12 16"><path d="M2.5 1.5L8.8 7.8L2.5 14.1" fill="none" stroke="#a9a9a9" stroke-width="1.3"/></svg>
<div class="a t" style="left:664px;top:93px;font-size:16.25px;color:#a9a9a9">Http</div>
<svg class="a" style="left:699px;top:95px" width="12" height="16" viewBox="0 0 12 16"><path d="M2.5 1.5L8.8 7.8L2.5 14.1" fill="none" stroke="#a9a9a9" stroke-width="1.3"/></svg>
<div class="a t" style="left:716px;top:93px;font-size:16.25px;color:#a9a9a9">Controllers</div>
<svg class="a" style="left:797px;top:95px" width="12" height="16" viewBox="0 0 12 16"><path d="M2.5 1.5L8.8 7.8L2.5 14.1" fill="none" stroke="#a9a9a9" stroke-width="1.3"/></svg>
<div class="a t" style="left:814px;top:93px;font-size:16.25px;color:#a9a9a9">Admin</div>
<svg class="a" style="left:866px;top:95px" width="12" height="16" viewBox="0 0 12 16"><path d="M2.5 1.5L8.8 7.8L2.5 14.1" fill="none" stroke="#a9a9a9" stroke-width="1.3"/></svg>
<div class="a" style="left:885px;top:95px"><svg class="ele" width="16" height="12" viewBox="0 0 16 12"><path fill="#a77bd0" d="M4.8 0.2C2.2 0.2 0.3 2.2 0.3 4.8C0.3 6.6 0.8 8.2 1.2 9.4L1.4 10.4C1.5 11 2.4 11.2 2.8 10.7L3.2 10.1V8.1L4.4 8.4V11.2H7.5V8.7H10.3V11.2H13.9V8.5C15 7.8 15.6 6.5 15.6 5C15.6 2.6 13.6 1 11.2 1H8C7.2 0.5 6 0.2 4.8 0.2Z"/><path fill="none" stroke="#5f4288" stroke-width="0.8" d="M7.6 1.2C8.4 2.8 8 5 6 5.8"/></svg></div>
<div class="a t" style="left:908px;top:93px;font-size:16.25px;color:#a9a9a9">UsersController.php</div>
<div class="a" style="left:596px;top:115px;width:1187px;height:616px;overflow:hidden"><div class="a" style="left:-596px;top:-115px;width:1920px;height:1080px"><div class="a" style="left:681.5px;top:622.25px;width:1101.5px;height:23.75px;box-sizing:border-box;border-top:2px solid #282828;border-bottom:2px solid #282828"></div><div class="a" style="left:681.50px;top:194.75px;width:1px;height:546.25px;background:#707070"></div><div class="a" style="left:720.00px;top:194.75px;width:1px;height:95.00px;background:#404040"></div><div class="a" style="left:720.00px;top:408.50px;width:1px;height:190.00px;background:#404040"></div><div class="a" style="left:720.00px;top:693.50px;width:1px;height:47.50px;background:#404040"></div><div class="a" style="left:758.50px;top:194.75px;width:1px;height:23.75px;background:#404040"></div><div class="a" style="left:758.50px;top:242.25px;width:1px;height:23.75px;background:#404040"></div><div class="a" style="left:758.50px;top:432.25px;width:1px;height:95.00px;background:#404040"></div><div class="a" style="left:758.50px;top:551.00px;width:1px;height:23.75px;background:#404040"></div><div class="a" style="left:758.50px;top:717.25px;width:1px;height:23.75px;background:#404040"></div><div class="a" style="left:797.00px;top:242.25px;width:1px;height:23.75px;background:#404040"></div><div class="a" style="left:797.00px;top:551.00px;width:1px;height:23.75px;background:#404040"></div><div class="a ln" style="top:196.35px;color:#6e7681">19</div><div class="a code" style="left:681.5px;top:196.35px">             <span style="color:#d9a3b3">return</span><span style="color:#d4d4d4"> </span><span style="color:#dcdcaa">view</span><span style="color:#ffd700">(</span><span style="color:#ce9178">&#x27;admin.user-management.index&#x27;</span><span style="color:#d4d4d4">,</span><span style="color:#da70d6">(</span><span style="color:#179fff">[</span><span style="color:#ce9178">&#x27;users_list&#x27;</span><span style="color:#d4d4d4"> =&gt; </span><span style="color:#9cdcfe">$users</span><span style="color:#179fff">]</span><span style="color:#da70d6">)</span><span style="color:#ffd700">)</span><span style="color:#d4d4d4">;</span></div><div class="a ln" style="top:220.10px;color:#6e7681">20</div><div class="a code" style="left:681.5px;top:220.10px">        <span style="color:#179fff">}</span><span style="color:#d4d4d4"> </span><span style="color:#d9a3b3">catch</span><span style="color:#d4d4d4"> </span><span style="color:#179fff">(</span><span style="color:#4ec9b0">Exception</span><span style="color:#d4d4d4"> </span><span style="color:#9cdcfe">$e</span><span style="color:#179fff">)</span><span style="color:#d4d4d4"> </span><span style="color:#179fff">{</span></div><div class="a ln" style="top:243.85px;color:#6e7681">21</div><div class="a code" style="left:681.5px;top:243.85px">              <span style="color:#d9a3b3">return</span><span style="color:#d4d4d4"> </span><span style="color:#dcdcaa">back</span><span style="color:#ffd700">()</span><span style="color:#d4d4d4">-&gt;</span><span style="color:#dcdcaa">with</span><span style="color:#ffd700">(</span><span style="color:#ce9178">&#x27;error&#x27;</span><span style="color:#d4d4d4">, </span><span style="color:#ce9178">&#x27;Failed to fetch user list: &#x27;</span><span style="color:#d4d4d4"> . </span><span style="color:#9cdcfe">$e</span><span style="color:#d4d4d4">-&gt;</span><span style="color:#dcdcaa">getMessage</span><span style="color:#da70d6">()</span><span style="color:#ffd700">)</span><span style="color:#d4d4d4">;</span></div><div class="a ln" style="top:267.60px;color:#6e7681">22</div><div class="a code" style="left:681.5px;top:267.60px">        <span style="color:#179fff">}</span></div><div class="a ln" style="top:291.35px;color:#6e7681">23</div><div class="a code" style="left:681.5px;top:291.35px">    <span style="color:#da70d6">}</span></div><div class="a ln" style="top:315.10px;color:#6e7681">24</div><div class="a code" style="left:681.5px;top:315.10px"></div><div class="a ln" style="top:338.85px;color:#6e7681">25</div><div class="a code" style="left:681.5px;top:338.85px">    <span style="color:#6a9955">/* Show user details with activity (bookings, transactions). */</span></div><div class="a ln" style="top:362.60px;color:#6e7681">26</div><div class="a code" style="left:681.5px;top:362.60px">    <span style="color:#569cd6">public</span><span style="color:#d4d4d4"> </span><span style="color:#569cd6">function</span><span style="color:#d4d4d4"> </span><span style="color:#dcdcaa">show</span><span style="color:#da70d6">(</span><span style="color:#9cdcfe">$id</span><span style="color:#da70d6">)</span></div><div class="a ln" style="top:386.35px;color:#6e7681">27</div><div class="a code" style="left:681.5px;top:386.35px">    <span style="color:#da70d6">{</span></div><div class="a ln" style="top:410.10px;color:#6e7681">28</div><div class="a code" style="left:681.5px;top:410.10px">        <span style="color:#d9a3b3">try</span><span style="color:#d4d4d4"> </span><span style="color:#179fff">{</span></div><div class="a ln" style="top:433.85px;color:#6e7681">29</div><div class="a code" style="left:681.5px;top:433.85px">            <span style="color:#9cdcfe">$user</span><span style="color:#d4d4d4"> = </span><span style="color:#4ec9b0">User</span><span style="color:#d4d4d4">::</span><span style="color:#dcdcaa">findOrFail</span><span style="color:#ffd700">(</span><span style="color:#9cdcfe">$id</span><span style="color:#ffd700">)</span><span style="color:#d4d4d4">;</span></div><div class="a ln" style="top:457.60px;color:#6e7681">30</div><div class="a code" style="left:681.5px;top:457.60px">            <span style="color:#9cdcfe">$booking_list</span><span style="color:#d4d4d4"> = </span><span style="color:#4ec9b0">Booking</span><span style="color:#d4d4d4">::</span><span style="color:#dcdcaa">with</span><span style="color:#ffd700">(</span><span style="color:#ce9178">&#x27;consultant&#x27;</span><span style="color:#d4d4d4">, </span><span style="color:#ce9178">&#x27;user&#x27;</span><span style="color:#ffd700">)</span><span style="color:#d4d4d4">-&gt;</span><span style="color:#dcdcaa">where</span><span style="color:#ffd700">(</span><span style="color:#ce9178">&#x27;user_id&#x27;</span><span style="color:#d4d4d4">,</span><span style="color:#9cdcfe">$id</span><span style="color:#ffd700">)</span><span style="color:#d4d4d4">-&gt;</span><span style="color:#dcdcaa">paginate</span><span style="color:#ffd700">(</span><span style="color:#b5cea8">10</span><span style="color:#d4d4d4">, </span><span style="color:#da70d6">[</span><span style="color:#ce9178">&#x27;*&#x27;</span><span style="color:#da70d6">]</span><span style="color:#d4d4d4">, </span><span style="color:#ce9178">&#x27;booking_page&#x27;</span><span style="color:#ffd700">)</span><span style="color:#d4d4d4">;</span></div><div class="a ln" style="top:481.35px;color:#6e7681">31</div><div class="a code" style="left:681.5px;top:481.35px">            <span style="color:#9cdcfe">$transaction_log</span><span style="color:#d4d4d4"> = </span><span style="color:#4ec9b0">TransactionLog</span><span style="color:#d4d4d4">::</span><span style="color:#dcdcaa">with</span><span style="color:#ffd700">(</span><span style="color:#ce9178">&#x27;user&#x27;</span><span style="color:#d4d4d4">,</span><span style="color:#ce9178">&#x27;booking&#x27;</span><span style="color:#ffd700">)</span><span style="color:#d4d4d4">-&gt;</span><span style="color:#dcdcaa">where</span><span style="color:#ffd700">(</span><span style="color:#ce9178">&#x27;user_id&#x27;</span><span style="color:#d4d4d4">,</span><span style="color:#9cdcfe">$id</span><span style="color:#ffd700">)</span><span style="color:#d4d4d4">-&gt;</span><span style="color:#dcdcaa">paginate</span><span style="color:#ffd700">(</span><span style="color:#b5cea8">10</span><span style="color:#d4d4d4">, </span><span style="color:#da70d6">[</span><span style="color:#ce9178">&#x27;*&#x27;</span><span style="color:#da70d6">]</span><span style="color:#d4d4d4">, </span><span style="color:#ce9178">&#x27;transaction_page&#x27;</span><span style="color:#ffd700">)</span><span style="color:#d4d4d4">;</span></div><div class="a ln" style="top:505.10px;color:#6e7681">32</div><div class="a code" style="left:681.5px;top:505.10px">            <span style="color:#d9a3b3">return</span><span style="color:#d4d4d4"> </span><span style="color:#dcdcaa">view</span><span style="color:#ffd700">(</span><span style="color:#ce9178">&#x27;admin.user-management.view&#x27;</span><span style="color:#d4d4d4">,</span><span style="color:#da70d6">(</span><span style="color:#179fff">[</span><span style="color:#ce9178">&#x27;details&#x27;</span><span style="color:#d4d4d4"> =&gt; </span><span style="color:#9cdcfe">$user</span><span style="color:#d4d4d4">,</span><span style="color:#ce9178">&#x27;booking_list&#x27;</span><span style="color:#d4d4d4">=&gt;</span><span style="color:#9cdcfe">$booking_list</span><span style="color:#d4d4d4">,</span><span style="color:#ce9178">&#x27;transaction_log&#x27;</span><span style="color:#d4d4d4">=&gt;</span><span style="color:#9cdcfe">$transaction_log</span><span style="color:#179fff">]</span><span style="color:#da70d6">)</span><span style="color:#ffd700">)</span><span style="color:#d4d4d4">;</span></div><div class="a ln" style="top:528.85px;color:#6e7681">33</div><div class="a code" style="left:681.5px;top:528.85px">        <span style="color:#179fff">}</span><span style="color:#d4d4d4"> </span><span style="color:#d9a3b3">catch</span><span style="color:#d4d4d4"> </span><span style="color:#179fff">(</span><span style="color:#4ec9b0">Exception</span><span style="color:#d4d4d4"> </span><span style="color:#9cdcfe">$e</span><span style="color:#179fff">)</span><span style="color:#d4d4d4"> </span><span style="color:#179fff">{</span></div><div class="a ln" style="top:552.60px;color:#6e7681">34</div><div class="a code" style="left:681.5px;top:552.60px">              <span style="color:#d9a3b3">return</span><span style="color:#d4d4d4"> </span><span style="color:#dcdcaa">back</span><span style="color:#ffd700">()</span><span style="color:#d4d4d4">-&gt;</span><span style="color:#dcdcaa">with</span><span style="color:#ffd700">(</span><span style="color:#ce9178">&#x27;error&#x27;</span><span style="color:#d4d4d4">, </span><span style="color:#ce9178">&#x27;Failed to fetch user details: &#x27;</span><span style="color:#d4d4d4"> . </span><span style="color:#9cdcfe">$e</span><span style="color:#d4d4d4">-&gt;</span><span style="color:#dcdcaa">getMessage</span><span style="color:#da70d6">()</span><span style="color:#ffd700">)</span><span style="color:#d4d4d4">;</span></div><div class="a ln" style="top:576.35px;color:#6e7681">35</div><div class="a code" style="left:681.5px;top:576.35px">        <span style="color:#179fff">}</span></div><div class="a ln" style="top:600.10px;color:#6e7681">36</div><div class="a code" style="left:681.5px;top:600.10px">    <span style="color:#da70d6">}</span></div><div class="a ln" style="top:623.85px;color:#cccccc">37</div><div class="a code" style="left:681.5px;top:623.85px"></div><div class="a ln" style="top:647.60px;color:#6e7681">38</div><div class="a code" style="left:681.5px;top:647.60px">    <span style="color:#6a9955">/* Deactivate a user account. */</span></div><div class="a ln" style="top:671.35px;color:#6e7681">39</div><div class="a code" style="left:681.5px;top:671.35px">    <span style="color:#569cd6">public</span><span style="color:#d4d4d4"> </span><span style="color:#569cd6">function</span><span style="color:#d4d4d4"> </span><span style="color:#dcdcaa">deactivate</span><span style="color:#da70d6">(</span><span style="color:#9cdcfe">$id</span><span style="color:#da70d6">)</span><span style="color:#d4d4d4"> </span><span style="color:#da70d6">{</span></div><div class="a ln" style="top:695.10px;color:#6e7681">40</div><div class="a code" style="left:681.5px;top:695.10px">        <span style="color:#d9a3b3">try</span><span style="color:#d4d4d4"> </span><span style="color:#179fff">{</span></div><div class="a ln" style="top:718.85px;color:#6e7681">41</div><div class="a code" style="left:681.5px;top:718.85px">            <span style="color:#9cdcfe">$user</span><span style="color:#d4d4d4"> = </span><span style="color:#4ec9b0">User</span><span style="color:#d4d4d4">::</span><span style="color:#dcdcaa">findOrFail</span><span style="color:#ffd700">(</span><span style="color:#9cdcfe">$id</span><span style="color:#ffd700">)</span><span style="color:#d4d4d4">;</span></div></div></div>
<div class="a" style="left:596px;top:115px;width:1187px;height:95px;background:#1f1f1f;box-shadow:0 3px 4px -1px #000"></div><div class="a ln" style="top:116.60px;color:#6e7681">13</div><div class="a code" style="left:681.5px;top:116.60px"><span style="color:#ffd700">{</span></div><div class="a ln" style="top:140.35px;color:#6e7681">16</div><div class="a code" style="left:681.5px;top:140.35px">    <span style="color:#da70d6">{</span></div><div class="a ln" style="top:164.10px;color:#6e7681">17</div><div class="a code" style="left:681.5px;top:164.10px">        <span style="color:#d9a3b3">try</span><span style="color:#d4d4d4"> </span><span style="color:#179fff">{</span></div><div class="a ln" style="top:187.85px;color:#6e7681">18</div><div class="a code" style="left:681.5px;top:187.85px">            <span style="color:#9cdcfe">$users</span><span style="color:#d4d4d4"> = </span><span style="color:#4ec9b0">User</span><span style="color:#d4d4d4">::</span><span style="color:#dcdcaa">latest</span><span style="color:#ffd700">()</span><span style="color:#d4d4d4">-&gt;</span><span style="color:#dcdcaa">paginate</span><span style="color:#ffd700">(</span><span style="color:#b5cea8">10</span><span style="color:#ffd700">)</span><span style="color:#d4d4d4">;</span></div>
<div class="a" style="left:1783px;top:115px;width:120px;height:616px;background:#1f1f1f;box-shadow:-2px 0 3px -1px #0c0c0c"></div><div class="a" style="left:1791.0px;top:115.0px;width:5.0px;height:1.3px;background:#569cd6;opacity:0.33"></div><div class="a" style="left:1791.0px;top:119.0px;width:9.0px;height:1.3px;background:#569cd6;opacity:0.33"></div><div class="a" style="left:1801.0px;top:119.0px;width:26.0px;height:1.3px;background:#4ec9b0;opacity:0.33"></div><div class="a" style="left:1827.0px;top:119.0px;width:1.0px;height:1.3px;background:#d4d4d4;opacity:0.33"></div><div class="a" style="left:1791.0px;top:123.0px;width:3.0px;height:1.3px;background:#569cd6;opacity:0.33"></div><div class="a" style="left:1795.0px;top:123.0px;width:31.0px;height:1.3px;background:#4ec9b0;opacity:0.33"></div><div class="a" style="left:1826.0px;top:123.0px;width:1.0px;height:1.3px;background:#d4d4d4;opacity:0.33"></div><div class="a" style="left:1791.0px;top:125.0px;width:3.0px;height:1.3px;background:#569cd6;opacity:0.33"></div><div class="a" style="left:1795.0px;top:125.0px;width:23.0px;height:1.3px;background:#4ec9b0;opacity:0.33"></div><div class="a" style="left:1818.0px;top:125.0px;width:1.0px;height:1.3px;background:#d4d4d4;opacity:0.33"></div><div class="a" style="left:1791.0px;top:127.0px;width:3.0px;height:1.3px;background:#569cd6;opacity:0.33"></div><div class="a" style="left:1795.0px;top:127.0px;width:15.0px;height:1.3px;background:#4ec9b0;opacity:0.33"></div><div class="a" style="left:1810.0px;top:127.0px;width:1.0px;height:1.3px;background:#d4d4d4;opacity:0.33"></div><div class="a" style="left:1791.0px;top:129.0px;width:3.0px;height:1.3px;background:#569cd6;opacity:0.33"></div><div class="a" style="left:1795.0px;top:129.0px;width:18.0px;height:1.3px;background:#4ec9b0;opacity:0.33"></div><div class="a" style="left:1813.0px;top:129.0px;width:1.0px;height:1.3px;background:#d4d4d4;opacity:0.33"></div><div class="a" style="left:1791.0px;top:131.0px;width:3.0px;height:1.3px;background:#569cd6;opacity:0.33"></div><div class="a" style="left:1795.0px;top:131.0px;width:25.0px;height:1.3px;background:#4ec9b0;opacity:0.33"></div><div class="a" style="left:1820.0px;top:131.0px;width:1.0px;height:1.3px;background:#d4d4d4;opacity:0.33"></div><div class="a" style="left:1791.0px;top:133.0px;width:3.0px;height:1.3px;background:#569cd6;opacity:0.33"></div><div class="a" style="left:1795.0px;top:133.0px;width:9.0px;height:1.3px;background:#4ec9b0;opacity:0.33"></div><div class="a" style="left:1804.0px;top:133.0px;width:1.0px;height:1.3px;background:#d4d4d4;opacity:0.33"></div><div class="a" style="left:1791.0px;top:137.0px;width:5.0px;height:1.3px;background:#569cd6;opacity:0.33"></div><div class="a" style="left:1797.0px;top:137.0px;width:15.0px;height:1.3px;background:#4ec9b0;opacity:0.33"></div><div class="a" style="left:1813.0px;top:137.0px;width:7.0px;height:1.3px;background:#569cd6;opacity:0.33"></div><div class="a" style="left:1821.0px;top:137.0px;width:10.0px;height:1.3px;background:#4ec9b0;opacity:0.33"></div><div class="a" style="left:1791.0px;top:139.0px;width:1.0px;height:1.3px;background:#ffd700;opacity:0.33"></div><div class="a" style="left:1795.0px;top:141.0px;width:2.0px;height:1.3px;background:#6a9955;opacity:0.33"></div><div class="a" style="left:1798.0px;top:141.0px;width:7.0px;height:1.3px;background:#6a9955;opacity:0.33"></div><div class="a" style="left:1806.0px;top:141.0px;width:1.0px;height:1.3px;background:#6a9955;opacity:0.33"></div><div class="a" style="left:1808.0px;top:141.0px;width:7.0px;height:1.3px;background:#6a9955;opacity:0.33"></div><div class="a" style="left:1816.0px;top:141.0px;width:2.0px;height:1.3px;background:#6a9955;opacity:0.33"></div><div class="a" style="left:1819.0px;top:141.0px;width:3.0px;height:1.3px;background:#6a9955;opacity:0.33"></div><div class="a" style="left:1823.0px;top:141.0px;width:6.0px;height:1.3px;background:#6a9955;opacity:0.33"></div><div class="a" style="left:1830.0px;top:141.0px;width:2.0px;height:1.3px;background:#6a9955;opacity:0.33"></div><div class="a" style="left:1795.0px;top:143.0px;width:6.0px;height:1.3px;background:#569cd6;opacity:0.33"></div><div class="a" style="left:1802.0px;top:143.0px;width:8.0px;height:1.3px;background:#569cd6;opacity:0.33"></div><div class="a" style="left:1811.0px;top:143.0px;width:5.0px;height:1.3px;background:#dcdcaa;opacity:0.33"></div><div class="a" style="left:1816.0px;top:143.0px;width:2.0px;height:1.3px;background:#da70d6;opacity:0.33"></div><div class="a" style="left:1795.0px;top:145.0px;width:1.0px;height:1.3px;background:#da70d6;opacity:0.33"></div><div class="a" style="left:1799.0px;top:147.0px;width:3.0px;height:1.3px;background:#d9a3b3;opacity:0.33"></div><div class="a" style="left:1803.0px;top:147.0px;width:1.0px;height:1.3px;background:#179fff;opacity:0.33"></div><div class="a" style="left:1803.0px;top:149.0px;width:6.0px;height:1.3px;background:#9cdcfe;opacity:0.33"></div><div class="a" style="left:1810.0px;top:149.0px;width:1.0px;height:1.3px;background:#d4d4d4;opacity:0.33"></div><div class="a" style="left:1812.0px;top:149.0px;width:4.0px;height:1.3px;background:#4ec9b0;opacity:0.33"></div><div class="a" style="left:1816.0px;top:149.0px;width:2.0px;height:1.3px;background:#d4d4d4;opacity:0.33"></div><div class="a" style="left:1818.0px;top:149.0px;width:6.0px;height:1.3px;background:#dcdcaa;opacity:0.33"></div><div class="a" style="left:1824.0px;top:149.0px;width:2.0px;height:1.3px;background:#ffd700;opacity:0.33"></div><div class="a" style="left:1826.0px;top:149.0px;width:2.0px;height:1.3px;background:#d4d4d4;opacity:0.33"></div><div class="a" style="left:1828.0px;top:149.0px;width:8.0px;height:1.3px;background:#dcdcaa;opacity:0.33"></div><div class="a" style="left:1836.0px;top:149.0px;width:1.0px;height:1.3px;background:#ffd700;opacity:0.33"></div><div class="a" style="left:1837.0px;top:149.0px;width:2.0px;height:1.3px;background:#b5cea8;opacity:0.33"></div><div class="a" style="left:1839.0px;top:149.0px;width:1.0px;height:1.3px;background:#ffd700;opacity:0.33"></div><div class="a" style="left:1840.0px;top:149.0px;width:1.0px;height:1.3px;background:#d4d4d4;opacity:0.33"></div><div class="a" style="left:1804.0px;top:151.0px;width:6.0px;height:1.3px;background:#d9a3b3;opacity:0.33"></div><div class="a" style="left:1811.0px;top:151.0px;width:4.0px;height:1.3px;background:#dcdcaa;opacity:0.33"></div><div class="a" style="left:1815.0px;top:151.0px;width:1.0px;height:1.3px;background:#ffd700;opacity:0.33"></div><div class="a" style="left:1816.0px;top:151.0px;width:29.0px;height:1.3px;background:#ce9178;opacity:0.33"></div><div class="a" style="left:1845.0px;top:151.0px;width:1.0px;height:1.3px;background:#d4d4d4;opacity:0.33"></div><div class="a" style="left:1846.0px;top:151.0px;width:1.0px;height:1.3px;background:#da70d6;opacity:0.33"></div><div class="a" style="left:1847.0px;top:151.0px;width:1.0px;height:1.3px;background:#179fff;opacity:0.33"></div><div class="a" style="left:1848.0px;top:151.0px;width:12.0px;height:1.3px;background:#ce9178;opacity:0.33"></div><div class="a" style="left:1861.0px;top:151.0px;width:2.0px;height:1.3px;background:#d4d4d4;opacity:0.33"></div><div class="a" style="left:1864.0px;top:151.0px;width:6.0px;height:1.3px;background:#9cdcfe;opacity:0.33"></div><div class="a" style="left:1870.0px;top:151.0px;width:1.0px;height:1.3px;background:#179fff;opacity:0.33"></div><div class="a" style="left:1871.0px;top:151.0px;width:1.0px;height:1.3px;background:#da70d6;opacity:0.33"></div><div class="a" style="left:1872.0px;top:151.0px;width:1.0px;height:1.3px;background:#ffd700;opacity:0.33"></div><div class="a" style="left:1873.0px;top:151.0px;width:1.0px;height:1.3px;background:#d4d4d4;opacity:0.33"></div><div class="a" style="left:1799.0px;top:153.0px;width:1.0px;height:1.3px;background:#179fff;opacity:0.33"></div><div class="a" style="left:1801.0px;top:153.0px;width:5.0px;height:1.3px;background:#d9a3b3;opacity:0.33"></div><div class="a" style="left:1807.0px;top:153.0px;width:1.0px;height:1.3px;background:#179fff;opacity:0.33"></div><div class="a" style="left:1808.0px;top:153.0px;width:9.0px;height:1.3px;background:#4ec9b0;opacity:0.33"></div><div class="a" style="left:1818.0px;top:153.0px;width:2.0px;height:1.3px;background:#9cdcfe;opacity:0.33"></div><div class="a" style="left:1820.0px;top:153.0px;width:1.0px;height:1.3px;background:#179fff;opacity:0.33"></div><div class="a" style="left:1822.0px;top:153.0px;width:1.0px;height:1.3px;background:#179fff;opacity:0.33"></div><div class="a" style="left:1805.0px;top:155.0px;width:6.0px;height:1.3px;background:#d9a3b3;opacity:0.33"></div><div class="a" style="left:1812.0px;top:155.0px;width:4.0px;height:1.3px;background:#dcdcaa;opacity:0.33"></div><div class="a" style="left:1816.0px;top:155.0px;width:2.0px;height:1.3px;background:#ffd700;opacity:0.33"></div><div class="a" style="left:1818.0px;top:155.0px;width:2.0px;height:1.3px;background:#d4d4d4;opacity:0.33"></div><div class="a" style="left:1820.0px;top:155.0px;width:4.0px;height:1.3px;background:#dcdcaa;opacity:0.33"></div><div class="a" style="left:1824.0px;top:155.0px;width:1.0px;height:1.3px;background:#ffd700;opacity:0.33"></div><div class="a" style="left:1825.0px;top:155.0px;width:7.0px;height:1.3px;background:#ce9178;opacity:0.33"></div><div class="a" style="left:1832.0px;top:155.0px;width:1.0px;height:1.3px;background:#d4d4d4;opacity:0.33"></div><div class="a" style="left:1834.0px;top:155.0px;width:7.0px;height:1.3px;background:#ce9178;opacity:0.33"></div><div class="a" style="left:1842.0px;top:155.0px;width:2.0px;height:1.3px;background:#ce9178;opacity:0.33"></div><div class="a" style="left:1845.0px;top:155.0px;width:5.0px;height:1.3px;background:#ce9178;opacity:0.33"></div><div class="a" style="left:1851.0px;top:155.0px;width:4.0px;height:1.3px;background:#ce9178;opacity:0.33"></div><div class="a" style="left:1856.0px;top:155.0px;width:5.0px;height:1.3px;background:#ce9178;opacity:0.33"></div><div class="a" style="left:1862.0px;top:155.0px;width:1.0px;height:1.3px;background:#ce9178;opacity:0.33"></div><div class="a" style="left:1864.0px;top:155.0px;width:1.0px;height:1.3px;background:#d4d4d4;opacity:0.33"></div><div class="a" style="left:1866.0px;top:155.0px;width:2.0px;height:1.3px;background:#9cdcfe;opacity:0.33"></div><div class="a" style="left:1868.0px;top:155.0px;width:2.0px;height:1.3px;background:#d4d4d4;opacity:0.33"></div><div class="a" style="left:1870.0px;top:155.0px;width:10.0px;height:1.3px;background:#dcdcaa;opacity:0.33"></div><div class="a" style="left:1880.0px;top:155.0px;width:2.0px;height:1.3px;background:#da70d6;opacity:0.33"></div><div class="a" style="left:1882.0px;top:155.0px;width:1.0px;height:1.3px;background:#ffd700;opacity:0.33"></div><div class="a" style="left:1883.0px;top:155.0px;width:1.0px;height:1.3px;background:#d4d4d4;opacity:0.33"></div><div class="a" style="left:1799.0px;top:157.0px;width:1.0px;height:1.3px;background:#179fff;opacity:0.33"></div><div class="a" style="left:1795.0px;top:159.0px;width:1.0px;height:1.3px;background:#da70d6;opacity:0.33"></div><div class="a" style="left:1795.0px;top:163.0px;width:2.0px;height:1.3px;background:#6a9955;opacity:0.33"></div><div class="a" style="left:1798.0px;top:163.0px;width:4.0px;height:1.3px;background:#6a9955;opacity:0.33"></div><div class="a" style="left:1803.0px;top:163.0px;width:4.0px;height:1.3px;background:#6a9955;opacity:0.33"></div><div class="a" style="left:1808.0px;top:163.0px;width:7.0px;height:1.3px;background:#6a9955;opacity:0.33"></div><div class="a" style="left:1816.0px;top:163.0px;width:4.0px;height:1.3px;background:#6a9955;opacity:0.33"></div><div class="a" style="left:1821.0px;top:163.0px;width:8.0px;height:1.3px;background:#6a9955;opacity:0.33"></div><div class="a" style="left:1830.0px;top:163.0px;width:10.0px;height:1.3px;background:#6a9955;opacity:0.33"></div><div class="a" style="left:1841.0px;top:163.0px;width:14.0px;height:1.3px;background:#6a9955;opacity:0.33"></div><div class="a" style="left:1856.0px;top:163.0px;width:2.0px;height:1.3px;background:#6a9955;opacity:0.33"></div><div class="a" style="left:1795.0px;top:165.0px;width:6.0px;height:1.3px;background:#569cd6;opacity:0.33"></div><div class="a" style="left:1802.0px;top:165.0px;width:8.0px;height:1.3px;background:#569cd6;opacity:0.33"></div><div class="a" style="left:1811.0px;top:165.0px;width:4.0px;height:1.3px;background:#dcdcaa;opacity:0.33"></div><div class="a" style="left:1815.0px;top:165.0px;width:1.0px;height:1.3px;background:#da70d6;opacity:0.33"></div><div class="a" style="left:1816.0px;top:165.0px;width:3.0px;height:1.3px;background:#9cdcfe;opacity:0.33"></div><div class="a" style="left:1819.0px;top:165.0px;width:1.0px;height:1.3px;background:#da70d6;opacity:0.33"></div><div class="a" style="left:1795.0px;top:167.0px;width:1.0px;height:1.3px;background:#da70d6;opacity:0.33"></div><div class="a" style="left:1799.0px;top:169.0px;width:3.0px;height:1.3px;background:#d9a3b3;opacity:0.33"></div><div class="a" style="left:1803.0px;top:169.0px;width:1.0px;height:1.3px;background:#179fff;opacity:0.33"></div><div class="a" style="left:1803.0px;top:171.0px;width:5.0px;height:1.3px;background:#9cdcfe;opacity:0.33"></div><div class="a" style="left:1809.0px;top:171.0px;width:1.0px;height:1.3px;background:#d4d4d4;opacity:0.33"></div><div class="a" style="left:1811.0px;top:171.0px;width:4.0px;height:1.3px;background:#4ec9b0;opacity:0.33"></div><div class="a" style="left:1815.0px;top:171.0px;width:2.0px;height:1.3px;background:#d4d4d4;opacity:0.33"></div><div class="a" style="left:1817.0px;top:171.0px;width:10.0px;height:1.3px;background:#dcdcaa;opacity:0.33"></div><div class="a" style="left:1827.0px;top:171.0px;width:1.0px;height:1.3px;background:#ffd700;opacity:0.33"></div><div class="a" style="left:1828.0px;top:171.0px;width:3.0px;height:1.3px;background:#9cdcfe;opacity:0.33"></div><div class="a" style="left:1831.0px;top:171.0px;width:1.0px;height:1.3px;background:#ffd700;opacity:0.33"></div><div class="a" style="left:1832.0px;top:171.0px;width:1.0px;height:1.3px;background:#d4d4d4;opacity:0.33"></div><div class="a" style="left:1803.0px;top:173.0px;width:13.0px;height:1.3px;background:#9cdcfe;opacity:0.33"></div><div class="a" style="left:1817.0px;top:173.0px;width:1.0px;height:1.3px;background:#d4d4d4;opacity:0.33"></div><div class="a" style="left:1819.0px;top:173.0px;width:7.0px;height:1.3px;background:#4ec9b0;opacity:0.33"></div><div class="a" style="left:1826.0px;top:173.0px;width:2.0px;height:1.3px;background:#d4d4d4;opacity:0.33"></div><div class="a" style="left:1828.0px;top:173.0px;width:4.0px;height:1.3px;background:#dcdcaa;opacity:0.33"></div><div class="a" style="left:1832.0px;top:173.0px;width:1.0px;height:1.3px;background:#ffd700;opacity:0.33"></div><div class="a" style="left:1833.0px;top:173.0px;width:12.0px;height:1.3px;background:#ce9178;opacity:0.33"></div><div class="a" style="left:1845.0px;top:173.0px;width:1.0px;height:1.3px;background:#d4d4d4;opacity:0.33"></div><div class="a" style="left:1847.0px;top:173.0px;width:6.0px;height:1.3px;background:#ce9178;opacity:0.33"></div><div class="a" style="left:1853.0px;top:173.0px;width:1.0px;height:1.3px;background:#ffd700;opacity:0.33"></div><div class="a" style="left:1854.0px;top:173.0px;width:2.0px;height:1.3px;background:#d4d4d4;opacity:0.33"></div><div class="a" style="left:1856.0px;top:173.0px;width:5.0px;height:1.3px;background:#dcdcaa;opacity:0.33"></div><div class="a" style="left:1861.0px;top:173.0px;width:1.0px;height:1.3px;background:#ffd700;opacity:0.33"></div><div class="a" style="left:1862.0px;top:173.0px;width:9.0px;height:1.3px;background:#ce9178;opacity:0.33"></div><div class="a" style="left:1871.0px;top:173.0px;width:1.0px;height:1.3px;background:#d4d4d4;opacity:0.33"></div><div class="a" style="left:1872.0px;top:173.0px;width:3.0px;height:1.3px;background:#9cdcfe;opacity:0.33"></div><div class="a" style="left:1875.0px;top:173.0px;width:1.0px;height:1.3px;background:#ffd700;opacity:0.33"></div><div class="a" style="left:1876.0px;top:173.0px;width:2.0px;height:1.3px;background:#d4d4d4;opacity:0.33"></div><div class="a" style="left:1878.0px;top:173.0px;width:8.0px;height:1.3px;background:#dcdcaa;opacity:0.33"></div><div class="a" style="left:1886.0px;top:173.0px;width:1.0px;height:1.3px;background:#ffd700;opacity:0.33"></div><div class="a" style="left:1887.0px;top:173.0px;width:2.0px;height:1.3px;background:#b5cea8;opacity:0.33"></div><div class="a" style="left:1889.0px;top:173.0px;width:1.0px;height:1.3px;background:#d4d4d4;opacity:0.33"></div><div class="a" style="left:1891.0px;top:173.0px;width:1.0px;height:1.3px;background:#da70d6;opacity:0.33"></div><div class="a" style="left:1892.0px;top:173.0px;width:3.0px;height:1.3px;background:#ce9178;opacity:0.33"></div><div class="a" style="left:1895.0px;top:173.0px;width:1.0px;height:1.3px;background:#da70d6;opacity:0.33"></div><div class="a" style="left:1896.0px;top:173.0px;width:1.0px;height:1.3px;background:#d4d4d4;opacity:0.33"></div><div class="a" style="left:1898.0px;top:173.0px;width:5.0px;height:1.3px;background:#ce9178;opacity:0.33"></div><div class="a" style="left:1803.0px;top:175.0px;width:16.0px;height:1.3px;background:#9cdcfe;opacity:0.33"></div><div class="a" style="left:1820.0px;top:175.0px;width:1.0px;height:1.3px;background:#d4d4d4;opacity:0.33"></div><div class="a" style="left:1822.0px;top:175.0px;width:14.0px;height:1.3px;background:#4ec9b0;opacity:0.33"></div><div class="a" style="left:1836.0px;top:175.0px;width:2.0px;height:1.3px;background:#d4d4d4;opacity:0.33"></div><div class="a" style="left:1838.0px;top:175.0px;width:4.0px;height:1.3px;background:#dcdcaa;opacity:0.33"></div><div class="a" style="left:1842.0px;top:175.0px;width:1.0px;height:1.3px;background:#ffd700;opacity:0.33"></div><div class="a" style="left:1843.0px;top:175.0px;width:6.0px;height:1.3px;background:#ce9178;opacity:0.33"></div><div class="a" style="left:1849.0px;top:175.0px;width:1.0px;height:1.3px;background:#d4d4d4;opacity:0.33"></div><div class="a" style="left:1850.0px;top:175.0px;width:9.0px;height:1.3px;background:#ce9178;opacity:0.33"></div><div class="a" style="left:1859.0px;top:175.0px;width:1.0px;height:1.3px;background:#ffd700;opacity:0.33"></div><div class="a" style="left:1860.0px;top:175.0px;width:2.0px;height:1.3px;background:#d4d4d4;opacity:0.33"></div><div class="a" style="left:1862.0px;top:175.0px;width:5.0px;height:1.3px;background:#dcdcaa;opacity:0.33"></div><div class="a" style="left:1867.0px;top:175.0px;width:1.0px;height:1.3px;background:#ffd700;opacity:0.33"></div><div class="a" style="left:1868.0px;top:175.0px;width:9.0px;height:1.3px;background:#ce9178;opacity:0.33"></div><div class="a" style="left:1877.0px;top:175.0px;width:1.0px;height:1.3px;background:#d4d4d4;opacity:0.33"></div><div class="a" style="left:1878.0px;top:175.0px;width:3.0px;height:1.3px;background:#9cdcfe;opacity:0.33"></div><div class="a" style="left:1881.0px;top:175.0px;width:1.0px;height:1.3px;background:#ffd700;opacity:0.33"></div><div class="a" style="left:1882.0px;top:175.0px;width:2.0px;height:1.3px;background:#d4d4d4;opacity:0.33"></div><div class="a" style="left:1884.0px;top:175.0px;width:8.0px;height:1.3px;background:#dcdcaa;opacity:0.33"></div><div class="a" style="left:1892.0px;top:175.0px;width:1.0px;height:1.3px;background:#ffd700;opacity:0.33"></div><div class="a" style="left:1893.0px;top:175.0px;width:2.0px;height:1.3px;background:#b5cea8;opacity:0.33"></div><div class="a" style="left:1895.0px;top:175.0px;width:1.0px;height:1.3px;background:#d4d4d4;opacity:0.33"></div><div class="a" style="left:1897.0px;top:175.0px;width:1.0px;height:1.3px;background:#da70d6;opacity:0.33"></div><div class="a" style="left:1898.0px;top:175.0px;width:3.0px;height:1.3px;background:#ce9178;opacity:0.33"></div><div class="a" style="left:1901.0px;top:175.0px;width:1.0px;height:1.3px;background:#da70d6;opacity:0.33"></div><div class="a" style="left:1902.0px;top:175.0px;width:1.0px;height:1.3px;background:#d4d4d4;opacity:0.33"></div><div class="a" style="left:1803.0px;top:177.0px;width:6.0px;height:1.3px;background:#d9a3b3;opacity:0.33"></div><div class="a" style="left:1810.0px;top:177.0px;width:4.0px;height:1.3px;background:#dcdcaa;opacity:0.33"></div><div class="a" style="left:1814.0px;top:177.0px;width:1.0px;height:1.3px;background:#ffd700;opacity:0.33"></div><div class="a" style="left:1815.0px;top:177.0px;width:28.0px;height:1.3px;background:#ce9178;opacity:0.33"></div><div class="a" style="left:1843.0px;top:177.0px;width:1.0px;height:1.3px;background:#d4d4d4;opacity:0.33"></div><div class="a" style="left:1844.0px;top:177.0px;width:1.0px;height:1.3px;background:#da70d6;opacity:0.33"></div><div class="a" style="left:1845.0px;top:177.0px;width:1.0px;height:1.3px;background:#179fff;opacity:0.33"></div><div class="a" style="left:1846.0px;top:177.0px;width:9.0px;height:1.3px;background:#ce9178;opacity:0.33"></div><div class="a" style="left:1856.0px;top:177.0px;width:2.0px;height:1.3px;background:#d4d4d4;opacity:0.33"></div><div class="a" style="left:1859.0px;top:177.0px;width:5.0px;height:1.3px;background:#9cdcfe;opacity:0.33"></div><div class="a" style="left:1864.0px;top:177.0px;width:1.0px;height:1.3px;background:#d4d4d4;opacity:0.33"></div><div class="a" style="left:1865.0px;top:177.0px;width:14.0px;height:1.3px;background:#ce9178;opacity:0.33"></div><div class="a" style="left:1879.0px;top:177.0px;width:2.0px;height:1.3px;background:#d4d4d4;opacity:0.33"></div><div class="a" style="left:1881.0px;top:177.0px;width:13.0px;height:1.3px;background:#9cdcfe;opacity:0.33"></div><div class="a" style="left:1894.0px;top:177.0px;width:1.0px;height:1.3px;background:#d4d4d4;opacity:0.33"></div><div class="a" style="left:1895.0px;top:177.0px;width:8.0px;height:1.3px;background:#ce9178;opacity:0.33"></div><div class="a" style="left:1799.0px;top:179.0px;width:1.0px;height:1.3px;background:#179fff;opacity:0.33"></div><div class="a" style="left:1801.0px;top:179.0px;width:5.0px;height:1.3px;background:#d9a3b3;opacity:0.33"></div><div class="a" style="left:1807.0px;top:179.0px;width:1.0px;height:1.3px;background:#179fff;opacity:0.33"></div><div class="a" style="left:1808.0px;top:179.0px;width:9.0px;height:1.3px;background:#4ec9b0;opacity:0.33"></div><div class="a" style="left:1818.0px;top:179.0px;width:2.0px;height:1.3px;background:#9cdcfe;opacity:0.33"></div><div class="a" style="left:1820.0px;top:179.0px;width:1.0px;height:1.3px;background:#179fff;opacity:0.33"></div><div class="a" style="left:1822.0px;top:179.0px;width:1.0px;height:1.3px;background:#179fff;opacity:0.33"></div><div class="a" style="left:1805.0px;top:181.0px;width:6.0px;height:1.3px;background:#d9a3b3;opacity:0.33"></div><div class="a" style="left:1812.0px;top:181.0px;width:4.0px;height:1.3px;background:#dcdcaa;opacity:0.33"></div><div class="a" style="left:1816.0px;top:181.0px;width:2.0px;height:1.3px;background:#ffd700;opacity:0.33"></div><div class="a" style="left:1818.0px;top:181.0px;width:2.0px;height:1.3px;background:#d4d4d4;opacity:0.33"></div><div class="a" style="left:1820.0px;top:181.0px;width:4.0px;height:1.3px;background:#dcdcaa;opacity:0.33"></div><div class="a" style="left:1824.0px;top:181.0px;width:1.0px;height:1.3px;background:#ffd700;opacity:0.33"></div><div class="a" style="left:1825.0px;top:181.0px;width:7.0px;height:1.3px;background:#ce9178;opacity:0.33"></div><div class="a" style="left:1832.0px;top:181.0px;width:1.0px;height:1.3px;background:#d4d4d4;opacity:0.33"></div><div class="a" style="left:1834.0px;top:181.0px;width:7.0px;height:1.3px;background:#ce9178;opacity:0.33"></div><div class="a" style="left:1842.0px;top:181.0px;width:2.0px;height:1.3px;background:#ce9178;opacity:0.33"></div><div class="a" style="left:1845.0px;top:181.0px;width:5.0px;height:1.3px;background:#ce9178;opacity:0.33"></div><div class="a" style="left:1851.0px;top:181.0px;width:4.0px;height:1.3px;background:#ce9178;opacity:0.33"></div><div class="a" style="left:1856.0px;top:181.0px;width:8.0px;height:1.3px;background:#ce9178;opacity:0.33"></div><div class="a" style="left:1865.0px;top:181.0px;width:1.0px;height:1.3px;background:#ce9178;opacity:0.33"></div><div class="a" style="left:1867.0px;top:181.0px;width:1.0px;height:1.3px;background:#d4d4d4;opacity:0.33"></div><div class="a" style="left:1869.0px;top:181.0px;width:2.0px;height:1.3px;background:#9cdcfe;opacity:0.33"></div><div class="a" style="left:1871.0px;top:181.0px;width:2.0px;height:1.3px;background:#d4d4d4;opacity:0.33"></div><div class="a" style="left:1873.0px;top:181.0px;width:10.0px;height:1.3px;background:#dcdcaa;opacity:0.33"></div><div class="a" style="left:1883.0px;top:181.0px;width:2.0px;height:1.3px;background:#da70d6;opacity:0.33"></div><div class="a" style="left:1885.0px;top:181.0px;width:1.0px;height:1.3px;background:#ffd700;opacity:0.33"></div><div class="a" style="left:1886.0px;top:181.0px;width:1.0px;height:1.3px;background:#d4d4d4;opacity:0.33"></div><div class="a" style="left:1799.0px;top:183.0px;width:1.0px;height:1.3px;background:#179fff;opacity:0.33"></div><div class="a" style="left:1795.0px;top:185.0px;width:1.0px;height:1.3px;background:#da70d6;opacity:0.33"></div><div class="a" style="left:1795.0px;top:189.0px;width:2.0px;height:1.3px;background:#6a9955;opacity:0.33"></div><div class="a" style="left:1798.0px;top:189.0px;width:10.0px;height:1.3px;background:#6a9955;opacity:0.33"></div><div class="a" style="left:1809.0px;top:189.0px;width:1.0px;height:1.3px;background:#6a9955;opacity:0.33"></div><div class="a" style="left:1811.0px;top:189.0px;width:4.0px;height:1.3px;background:#6a9955;opacity:0.33"></div><div class="a" style="left:1816.0px;top:189.0px;width:8.0px;height:1.3px;background:#6a9955;opacity:0.33"></div><div class="a" style="left:1825.0px;top:189.0px;width:2.0px;height:1.3px;background:#6a9955;opacity:0.33"></div><div class="a" style="left:1795.0px;top:191.0px;width:6.0px;height:1.3px;background:#569cd6;opacity:0.33"></div><div class="a" style="left:1802.0px;top:191.0px;width:8.0px;height:1.3px;background:#569cd6;opacity:0.33"></div><div class="a" style="left:1811.0px;top:191.0px;width:10.0px;height:1.3px;background:#dcdcaa;opacity:0.33"></div><div class="a" style="left:1821.0px;top:191.0px;width:1.0px;height:1.3px;background:#da70d6;opacity:0.33"></div><div class="a" style="left:1822.0px;top:191.0px;width:3.0px;height:1.3px;background:#9cdcfe;opacity:0.33"></div><div class="a" style="left:1825.0px;top:191.0px;width:1.0px;height:1.3px;background:#da70d6;opacity:0.33"></div><div class="a" style="left:1827.0px;top:191.0px;width:1.0px;height:1.3px;background:#da70d6;opacity:0.33"></div><div class="a" style="left:1799.0px;top:193.0px;width:3.0px;height:1.3px;background:#d9a3b3;opacity:0.33"></div><div class="a" style="left:1803.0px;top:193.0px;width:1.0px;height:1.3px;background:#179fff;opacity:0.33"></div><div class="a" style="left:1803.0px;top:195.0px;width:5.0px;height:1.3px;background:#9cdcfe;opacity:0.33"></div><div class="a" style="left:1809.0px;top:195.0px;width:1.0px;height:1.3px;background:#d4d4d4;opacity:0.33"></div><div class="a" style="left:1811.0px;top:195.0px;width:4.0px;height:1.3px;background:#4ec9b0;opacity:0.33"></div><div class="a" style="left:1815.0px;top:195.0px;width:2.0px;height:1.3px;background:#d4d4d4;opacity:0.33"></div><div class="a" style="left:1817.0px;top:195.0px;width:10.0px;height:1.3px;background:#dcdcaa;opacity:0.33"></div><div class="a" style="left:1827.0px;top:195.0px;width:1.0px;height:1.3px;background:#ffd700;opacity:0.33"></div><div class="a" style="left:1828.0px;top:195.0px;width:3.0px;height:1.3px;background:#9cdcfe;opacity:0.33"></div><div class="a" style="left:1831.0px;top:195.0px;width:1.0px;height:1.3px;background:#ffd700;opacity:0.33"></div><div class="a" style="left:1832.0px;top:195.0px;width:1.0px;height:1.3px;background:#d4d4d4;opacity:0.33"></div><div class="a" style="left:1803.0px;top:197.0px;width:5.0px;height:1.3px;background:#9cdcfe;opacity:0.33"></div><div class="a" style="left:1808.0px;top:197.0px;width:2.0px;height:1.3px;background:#d4d4d4;opacity:0.33"></div><div class="a" style="left:1810.0px;top:197.0px;width:6.0px;height:1.3px;background:#9cdcfe;opacity:0.33"></div><div class="a" style="left:1817.0px;top:197.0px;width:1.0px;height:1.3px;background:#d4d4d4;opacity:0.33"></div><div class="a" style="left:1819.0px;top:197.0px;width:1.0px;height:1.3px;background:#b5cea8;opacity:0.33"></div><div class="a" style="left:1820.0px;top:197.0px;width:1.0px;height:1.3px;background:#d4d4d4;opacity:0.33"></div><div class="a" style="left:1803.0px;top:199.0px;width:5.0px;height:1.3px;background:#9cdcfe;opacity:0.33"></div><div class="a" style="left:1808.0px;top:199.0px;width:2.0px;height:1.3px;background:#d4d4d4;opacity:0.33"></div><div class="a" style="left:1810.0px;top:199.0px;width:4.0px;height:1.3px;background:#dcdcaa;opacity:0.33"></div><div class="a" style="left:1814.0px;top:199.0px;width:2.0px;height:1.3px;background:#ffd700;opacity:0.33"></div><div class="a" style="left:1816.0px;top:199.0px;width:1.0px;height:1.3px;background:#d4d4d4;opacity:0.33"></div><div class="a" style="left:1803.0px;top:201.0px;width:6.0px;height:1.3px;background:#d9a3b3;opacity:0.33"></div><div class="a" style="left:1810.0px;top:201.0px;width:8.0px;height:1.3px;background:#dcdcaa;opacity:0.33"></div><div class="a" style="left:1818.0px;top:201.0px;width:2.0px;height:1.3px;background:#ffd700;opacity:0.33"></div><div class="a" style="left:1820.0px;top:201.0px;width:2.0px;height:1.3px;background:#d4d4d4;opacity:0.33"></div><div class="a" style="left:1822.0px;top:201.0px;width:5.0px;height:1.3px;background:#dcdcaa;opacity:0.33"></div><div class="a" style="left:1827.0px;top:201.0px;width:1.0px;height:1.3px;background:#ffd700;opacity:0.33"></div><div class="a" style="left:1828.0px;top:201.0px;width:29.0px;height:1.3px;background:#ce9178;opacity:0.33"></div><div class="a" style="left:1857.0px;top:201.0px;width:1.0px;height:1.3px;background:#ffd700;opacity:0.33"></div><div class="a" style="left:1858.0px;top:201.0px;width:2.0px;height:1.3px;background:#d4d4d4;opacity:0.33"></div><div class="a" style="left:1860.0px;top:201.0px;width:4.0px;height:1.3px;background:#dcdcaa;opacity:0.33"></div><div class="a" style="left:1864.0px;top:201.0px;width:1.0px;height:1.3px;background:#ffd700;opacity:0.33"></div><div class="a" style="left:1865.0px;top:201.0px;width:9.0px;height:1.3px;background:#ce9178;opacity:0.33"></div><div class="a" style="left:1874.0px;top:201.0px;width:1.0px;height:1.3px;background:#d4d4d4;opacity:0.33"></div><div class="a" style="left:1876.0px;top:201.0px;width:5.0px;height:1.3px;background:#ce9178;opacity:0.33"></div><div class="a" style="left:1882.0px;top:201.0px;width:11.0px;height:1.3px;background:#ce9178;opacity:0.33"></div><div class="a" style="left:1894.0px;top:201.0px;width:9.0px;height:1.3px;background:#ce9178;opacity:0.33"></div><div class="a" style="left:1799.0px;top:203.0px;width:1.0px;height:1.3px;background:#179fff;opacity:0.33"></div><div class="a" style="left:1801.0px;top:203.0px;width:5.0px;height:1.3px;background:#d9a3b3;opacity:0.33"></div><div class="a" style="left:1807.0px;top:203.0px;width:1.0px;height:1.3px;background:#179fff;opacity:0.33"></div><div class="a" style="left:1808.0px;top:203.0px;width:9.0px;height:1.3px;background:#4ec9b0;opacity:0.33"></div><div class="a" style="left:1818.0px;top:203.0px;width:2.0px;height:1.3px;background:#9cdcfe;opacity:0.33"></div><div class="a" style="left:1820.0px;top:203.0px;width:1.0px;height:1.3px;background:#179fff;opacity:0.33"></div><div class="a" style="left:1822.0px;top:203.0px;width:1.0px;height:1.3px;background:#179fff;opacity:0.33"></div><div class="a" style="left:1803.0px;top:205.0px;width:6.0px;height:1.3px;background:#d9a3b3;opacity:0.33"></div><div class="a" style="left:1810.0px;top:205.0px;width:4.0px;height:1.3px;background:#dcdcaa;opacity:0.33"></div><div class="a" style="left:1814.0px;top:205.0px;width:2.0px;height:1.3px;background:#ffd700;opacity:0.33"></div><div class="a" style="left:1816.0px;top:205.0px;width:2.0px;height:1.3px;background:#d4d4d4;opacity:0.33"></div><div class="a" style="left:1818.0px;top:205.0px;width:4.0px;height:1.3px;background:#dcdcaa;opacity:0.33"></div><div class="a" style="left:1822.0px;top:205.0px;width:1.0px;height:1.3px;background:#ffd700;opacity:0.33"></div><div class="a" style="left:1823.0px;top:205.0px;width:7.0px;height:1.3px;background:#ce9178;opacity:0.33"></div><div class="a" style="left:1830.0px;top:205.0px;width:1.0px;height:1.3px;background:#d4d4d4;opacity:0.33"></div><div class="a" style="left:1832.0px;top:205.0px;width:7.0px;height:1.3px;background:#ce9178;opacity:0.33"></div><div class="a" style="left:1840.0px;top:205.0px;width:2.0px;height:1.3px;background:#ce9178;opacity:0.33"></div><div class="a" style="left:1843.0px;top:205.0px;width:10.0px;height:1.3px;background:#ce9178;opacity:0.33"></div><div class="a" style="left:1854.0px;top:205.0px;width:5.0px;height:1.3px;background:#ce9178;opacity:0.33"></div><div class="a" style="left:1860.0px;top:205.0px;width:1.0px;height:1.3px;background:#ce9178;opacity:0.33"></div><div class="a" style="left:1862.0px;top:205.0px;width:1.0px;height:1.3px;background:#d4d4d4;opacity:0.33"></div><div class="a" style="left:1864.0px;top:205.0px;width:2.0px;height:1.3px;background:#9cdcfe;opacity:0.33"></div><div class="a" style="left:1866.0px;top:205.0px;width:2.0px;height:1.3px;background:#d4d4d4;opacity:0.33"></div><div class="a" style="left:1868.0px;top:205.0px;width:10.0px;height:1.3px;background:#dcdcaa;opacity:0.33"></div><div class="a" style="left:1878.0px;top:205.0px;width:2.0px;height:1.3px;background:#da70d6;opacity:0.33"></div><div class="a" style="left:1880.0px;top:205.0px;width:1.0px;height:1.3px;background:#ffd700;opacity:0.33"></div><div class="a" style="left:1881.0px;top:205.0px;width:1.0px;height:1.3px;background:#d4d4d4;opacity:0.33"></div><div class="a" style="left:1799.0px;top:207.0px;width:1.0px;height:1.3px;background:#179fff;opacity:0.33"></div><div class="a" style="left:1795.0px;top:209.0px;width:1.0px;height:1.3px;background:#da70d6;opacity:0.33"></div><div class="a" style="left:1795.0px;top:213.0px;width:2.0px;height:1.3px;background:#6a9955;opacity:0.33"></div><div class="a" style="left:1798.0px;top:213.0px;width:8.0px;height:1.3px;background:#6a9955;opacity:0.33"></div><div class="a" style="left:1807.0px;top:213.0px;width:1.0px;height:1.3px;background:#6a9955;opacity:0.33"></div><div class="a" style="left:1809.0px;top:213.0px;width:4.0px;height:1.3px;background:#6a9955;opacity:0.33"></div><div class="a" style="left:1814.0px;top:213.0px;width:8.0px;height:1.3px;background:#6a9955;opacity:0.33"></div><div class="a" style="left:1823.0px;top:213.0px;width:2.0px;height:1.3px;background:#6a9955;opacity:0.33"></div><div class="a" style="left:1795.0px;top:215.0px;width:6.0px;height:1.3px;background:#569cd6;opacity:0.33"></div><div class="a" style="left:1802.0px;top:215.0px;width:8.0px;height:1.3px;background:#569cd6;opacity:0.33"></div><div class="a" style="left:1811.0px;top:215.0px;width:8.0px;height:1.3px;background:#dcdcaa;opacity:0.33"></div><div class="a" style="left:1819.0px;top:215.0px;width:1.0px;height:1.3px;background:#da70d6;opacity:0.33"></div><div class="a" style="left:1820.0px;top:215.0px;width:3.0px;height:1.3px;background:#9cdcfe;opacity:0.33"></div><div class="a" style="left:1823.0px;top:215.0px;width:1.0px;height:1.3px;background:#da70d6;opacity:0.33"></div><div class="a" style="left:1825.0px;top:215.0px;width:1.0px;height:1.3px;background:#da70d6;opacity:0.33"></div><div class="a" style="left:1799.0px;top:217.0px;width:3.0px;height:1.3px;background:#d9a3b3;opacity:0.33"></div><div class="a" style="left:1803.0px;top:217.0px;width:1.0px;height:1.3px;background:#179fff;opacity:0.33"></div><div class="a" style="left:1803.0px;top:219.0px;width:5.0px;height:1.3px;background:#9cdcfe;opacity:0.33"></div><div class="a" style="left:1809.0px;top:219.0px;width:1.0px;height:1.3px;background:#d4d4d4;opacity:0.33"></div><div class="a" style="left:1811.0px;top:219.0px;width:4.0px;height:1.3px;background:#4ec9b0;opacity:0.33"></div><div class="a" style="left:1815.0px;top:219.0px;width:2.0px;height:1.3px;background:#d4d4d4;opacity:0.33"></div><div class="a" style="left:1817.0px;top:219.0px;width:10.0px;height:1.3px;background:#dcdcaa;opacity:0.33"></div><div class="a" style="left:1827.0px;top:219.0px;width:1.0px;height:1.3px;background:#ffd700;opacity:0.33"></div><div class="a" style="left:1828.0px;top:219.0px;width:3.0px;height:1.3px;background:#9cdcfe;opacity:0.33"></div><div class="a" style="left:1831.0px;top:219.0px;width:1.0px;height:1.3px;background:#ffd700;opacity:0.33"></div><div class="a" style="left:1832.0px;top:219.0px;width:1.0px;height:1.3px;background:#d4d4d4;opacity:0.33"></div><div class="a" style="left:1803.0px;top:221.0px;width:5.0px;height:1.3px;background:#9cdcfe;opacity:0.33"></div><div class="a" style="left:1808.0px;top:221.0px;width:2.0px;height:1.3px;background:#d4d4d4;opacity:0.33"></div><div class="a" style="left:1810.0px;top:221.0px;width:6.0px;height:1.3px;background:#9cdcfe;opacity:0.33"></div><div class="a" style="left:1817.0px;top:221.0px;width:1.0px;height:1.3px;background:#d4d4d4;opacity:0.33"></div><div class="a" style="left:1819.0px;top:221.0px;width:1.0px;height:1.3px;background:#b5cea8;opacity:0.33"></div><div class="a" style="left:1820.0px;top:221.0px;width:1.0px;height:1.3px;background:#d4d4d4;opacity:0.33"></div><div class="a" style="left:1803.0px;top:223.0px;width:5.0px;height:1.3px;background:#9cdcfe;opacity:0.33"></div><div class="a" style="left:1808.0px;top:223.0px;width:2.0px;height:1.3px;background:#d4d4d4;opacity:0.33"></div><div class="a" style="left:1810.0px;top:223.0px;width:4.0px;height:1.3px;background:#dcdcaa;opacity:0.33"></div><div class="a" style="left:1814.0px;top:223.0px;width:2.0px;height:1.3px;background:#ffd700;opacity:0.33"></div><div class="a" style="left:1816.0px;top:223.0px;width:1.0px;height:1.3px;background:#d4d4d4;opacity:0.33"></div><div class="a" style="left:1803.0px;top:225.0px;width:6.0px;height:1.3px;background:#d9a3b3;opacity:0.33"></div><div class="a" style="left:1810.0px;top:225.0px;width:8.0px;height:1.3px;background:#dcdcaa;opacity:0.33"></div><div class="a" style="left:1818.0px;top:225.0px;width:2.0px;height:1.3px;background:#ffd700;opacity:0.33"></div><div class="a" style="left:1820.0px;top:225.0px;width:2.0px;height:1.3px;background:#d4d4d4;opacity:0.33"></div><div class="a" style="left:1822.0px;top:225.0px;width:5.0px;height:1.3px;background:#dcdcaa;opacity:0.33"></div><div class="a" style="left:1827.0px;top:225.0px;width:1.0px;height:1.3px;background:#ffd700;opacity:0.33"></div><div class="a" style="left:1828.0px;top:225.0px;width:29.0px;height:1.3px;background:#ce9178;opacity:0.33"></div><div class="a" style="left:1857.0px;top:225.0px;width:1.0px;height:1.3px;background:#ffd700;opacity:0.33"></div><div class="a" style="left:1858.0px;top:225.0px;width:2.0px;height:1.3px;background:#d4d4d4;opacity:0.33"></div><div class="a" style="left:1860.0px;top:225.0px;width:4.0px;height:1.3px;background:#dcdcaa;opacity:0.33"></div><div class="a" style="left:1864.0px;top:225.0px;width:1.0px;height:1.3px;background:#ffd700;opacity:0.33"></div><div class="a" style="left:1865.0px;top:225.0px;width:9.0px;height:1.3px;background:#ce9178;opacity:0.33"></div><div class="a" style="left:1874.0px;top:225.0px;width:1.0px;height:1.3px;background:#d4d4d4;opacity:0.33"></div><div class="a" style="left:1876.0px;top:225.0px;width:5.0px;height:1.3px;background:#ce9178;opacity:0.33"></div><div class="a" style="left:1882.0px;top:225.0px;width:9.0px;height:1.3px;background:#ce9178;opacity:0.33"></div><div class="a" style="left:1892.0px;top:225.0px;width:11.0px;height:1.3px;background:#ce9178;opacity:0.33"></div><div class="a" style="left:1799.0px;top:227.0px;width:1.0px;height:1.3px;background:#179fff;opacity:0.33"></div><div class="a" style="left:1801.0px;top:227.0px;width:5.0px;height:1.3px;background:#d9a3b3;opacity:0.33"></div><div class="a" style="left:1807.0px;top:227.0px;width:1.0px;height:1.3px;background:#179fff;opacity:0.33"></div><div class="a" style="left:1808.0px;top:227.0px;width:9.0px;height:1.3px;background:#4ec9b0;opacity:0.33"></div><div class="a" style="left:1818.0px;top:227.0px;width:2.0px;height:1.3px;background:#9cdcfe;opacity:0.33"></div><div class="a" style="left:1820.0px;top:227.0px;width:1.0px;height:1.3px;background:#179fff;opacity:0.33"></div><div class="a" style="left:1822.0px;top:227.0px;width:1.0px;height:1.3px;background:#179fff;opacity:0.33"></div><div class="a" style="left:1803.0px;top:229.0px;width:6.0px;height:1.3px;background:#d9a3b3;opacity:0.33"></div><div class="a" style="left:1810.0px;top:229.0px;width:4.0px;height:1.3px;background:#dcdcaa;opacity:0.33"></div><div class="a" style="left:1814.0px;top:229.0px;width:2.0px;height:1.3px;background:#ffd700;opacity:0.33"></div><div class="a" style="left:1816.0px;top:229.0px;width:2.0px;height:1.3px;background:#d4d4d4;opacity:0.33"></div><div class="a" style="left:1818.0px;top:229.0px;width:4.0px;height:1.3px;background:#dcdcaa;opacity:0.33"></div><div class="a" style="left:1822.0px;top:229.0px;width:1.0px;height:1.3px;background:#ffd700;opacity:0.33"></div><div class="a" style="left:1823.0px;top:229.0px;width:7.0px;height:1.3px;background:#ce9178;opacity:0.33"></div><div class="a" style="left:1830.0px;top:229.0px;width:1.0px;height:1.3px;background:#d4d4d4;opacity:0.33"></div><div class="a" style="left:1832.0px;top:229.0px;width:7.0px;height:1.3px;background:#ce9178;opacity:0.33"></div><div class="a" style="left:1840.0px;top:229.0px;width:2.0px;height:1.3px;background:#ce9178;opacity:0.33"></div><div class="a" style="left:1843.0px;top:229.0px;width:8.0px;height:1.3px;background:#ce9178;opacity:0.33"></div><div class="a" style="left:1852.0px;top:229.0px;width:5.0px;height:1.3px;background:#ce9178;opacity:0.33"></div><div class="a" style="left:1858.0px;top:229.0px;width:1.0px;height:1.3px;background:#ce9178;opacity:0.33"></div><div class="a" style="left:1860.0px;top:229.0px;width:1.0px;height:1.3px;background:#d4d4d4;opacity:0.33"></div><div class="a" style="left:1862.0px;top:229.0px;width:2.0px;height:1.3px;background:#9cdcfe;opacity:0.33"></div><div class="a" style="left:1864.0px;top:229.0px;width:2.0px;height:1.3px;background:#d4d4d4;opacity:0.33"></div><div class="a" style="left:1866.0px;top:229.0px;width:10.0px;height:1.3px;background:#dcdcaa;opacity:0.33"></div><div class="a" style="left:1876.0px;top:229.0px;width:2.0px;height:1.3px;background:#da70d6;opacity:0.33"></div><div class="a" style="left:1878.0px;top:229.0px;width:1.0px;height:1.3px;background:#ffd700;opacity:0.33"></div><div class="a" style="left:1879.0px;top:229.0px;width:1.0px;height:1.3px;background:#d4d4d4;opacity:0.33"></div><div class="a" style="left:1799.0px;top:231.0px;width:1.0px;height:1.3px;background:#179fff;opacity:0.33"></div><div class="a" style="left:1795.0px;top:233.0px;width:1.0px;height:1.3px;background:#da70d6;opacity:0.33"></div><div class="a" style="left:1791.0px;top:235.0px;width:1.0px;height:1.3px;background:#ffd700;opacity:0.33"></div>
<div class="a" style="left:1903px;top:115px;width:17px;height:616px;background:#1f1f1f;border-left:1px solid #161616"></div>
<div class="a" style="left:1904px;top:230px;width:16px;height:181px;background:#434343"></div>
<div class="a" style="left:1904px;top:379px;width:16px;height:2px;background:#a0a0a0"></div>
<div class="a" style="left:682px;top:716.5px;width:859px;height:14.5px;background:rgba(121,121,121,0.4)"></div>
<div class="a" style="left:1241px;top:115px;width:523px;height:40px;background:#202020;border-bottom:1px solid #2f2f2f;border-right:1px solid #2f2f2f;border-radius:0 0 5px 5px;box-shadow:0 0 8px 2px rgba(0,0,0,0.5);clip-path:inset(0 -20px -20px -20px)"></div><div class="a" style="left:1241px;top:115px;width:3px;height:40px;background:#454545;border-radius:0 0 0 4px"></div><svg class="a" style="left:1250px;top:127px" width="16" height="16" viewBox="0 0 16 16"><path d="M5.5 2.5l5.5 5.5-5.5 5.5" fill="none" stroke="#cccccc" stroke-width="1.3"/></svg><div class="a" style="left:1269px;top:119px;width:275px;height:30px;background:#313131;border:1px solid #3c3c3c;border-radius:3px;box-sizing:border-box"></div><div class="a t" style="left:1277px;top:125px;font-size:16.25px;color:#cccccc">leave</div><div class="a" style="left:1463px;top:123px;width:25px;height:25px;background:#2a5b86;border:1px solid #2488db;border-radius:4px;box-sizing:border-box"></div><div class="a t" style="left:1466px;top:126px;font-size:16px;color:#ffffff">Aa</div><div class="a t" style="left:1494px;top:123px;font-size:16px;color:#cccccc">ab</div><svg class="a" style="left:1492px;top:140px" width="22" height="6" viewBox="0 0 22 6"><path d="M1.5 1V2.5Q1.5 4.5 3.5 4.5H18.5Q20.5 4.5 20.5 2.5V1" fill="none" stroke="#cccccc" stroke-width="1.4"/></svg><svg class="a" style="left:1520px;top:125px" width="20" height="20" viewBox="0 0 20 20"><circle cx="4.5" cy="14.5" r="1.4" fill="#cccccc"/><path d="M12.5 2.5v7M9.5 4.2l6 3.6M15.5 4.2l-6 3.6" stroke="#cccccc" stroke-width="1.5"/></svg><div class="a t" style="left:1551px;top:126px;font-size:16.25px;color:#f14c4c;transform:scaleX(0.92);transform-origin:left">No results</div><svg class="a" style="left:1644px;top:125px" width="18" height="18" viewBox="0 0 18 18"><path d="M9 16V3M3.5 8.5L9 3l5.5 5.5" fill="none" stroke="#8a8a8a" stroke-width="1.4"/></svg><svg class="a" style="left:1675px;top:125px" width="18" height="18" viewBox="0 0 18 18"><path d="M9 2v13M3.5 9.5L9 15l5.5-5.5" fill="none" stroke="#8a8a8a" stroke-width="1.4"/></svg><svg class="a" style="left:1705px;top:125px" width="18" height="18" viewBox="0 0 18 18"><path d="M2 4h11M2 9.3h14M2 14.5h11" stroke="#cccccc" stroke-width="1.4"/></svg><svg class="a" style="left:1736px;top:125px" width="18" height="18" viewBox="0 0 18 18"><path d="M3 3l12 12M15 3L3 15" stroke="#cccccc" stroke-width="1.5"/></svg>
<div class="a" style="left:596px;top:731px;width:1324px;height:322px;background:#181818;border-top:1px solid #2b2b2b"></div>
<div class="a t ptab" style="left:621px;top:746.5px;color:#9d9d9d">PROBLEMS</div>
<div class="a t ptab" style="left:718px;top:746.5px;color:#e7e7e7">OUTPUT</div>
<div class="a t ptab" style="left:800px;top:746.5px;color:#9d9d9d">DEBUG CONSOLE</div>
<div class="a t ptab" style="left:937px;top:746.5px;color:#9d9d9d">PORTS</div>
<div class="a" style="left:716px;top:766.5px;width:56px;height:1.3px;background:#0078d4"></div>
<div class="a dots3" style="left:1803px;top:753px"></div>
<div class="a" style="left:1835px;top:744px;width:1px;height:22px;background:#4a4a4a"></div>
<svg class="a" style="left:1849px;top:745px" width="19" height="19" viewBox="0 0 19 19"><path d="M2 6.5V2h4.5M12.5 2H17v4.5M17 12.5V17h-4.5M6.5 17H2v-4.5" fill="none" stroke="#cccccc" stroke-width="1.5"/></svg>
<svg class="a" style="left:1882px;top:745px" width="18" height="18" viewBox="0 0 18 18"><path d="M3 3l12 12M15 3L3 15" stroke="#cccccc" stroke-width="1.5"/></svg>
<div class="a" style="left:596px;top:775px;width:1324px;height:28px;background:#2a2a2a"></div>
<svg class="a" style="left:601px;top:784px" width="16" height="10" viewBox="0 0 16 10"><path d="M1.2 1.4L7.75 7.9L14.3 1.4" fill="none" stroke="#c5c5c5" stroke-width="1.3"/></svg>
<div class="a t" style="left:621px;top:781.5px;font-size:13.75px;font-weight:bold;color:#cccccc;transform:scaleX(0.965);transform-origin:left">OUTPUT</div>
<div class="a" style="left:984px;top:775px;width:1px;height:277px;background:#2b2b2b"></div>
<svg class="a" style="left:989.3px;top:784px" width="16" height="10" viewBox="0 0 16 10"><path d="M1.2 1.4L7.75 7.9L14.3 1.4" fill="none" stroke="#c5c5c5" stroke-width="1.3"/></svg>
<div class="a t" style="left:1010px;top:781.5px;font-size:13.75px;font-weight:bold;color:#cccccc;transform:scaleX(0.965);transform-origin:left">TERMINAL</div>
<div class="a" style="left:621px;top:815px;width:337px;height:30px;background:#2e2e2e;border-radius:3px"></div>
<div class="a t" style="left:630px;top:822.5px;font-size:16.25px;color:#8f8f8f">Filter</div>
<div class="a" style="left:967px;top:857px;width:17px;height:2px;background:#5a5a5a"></div>
<div class="a" style="left:966px;top:858px;width:1px;height:194px;background:#2b2b2b"></div>
<div class="a code it" style="left:626px;top:859.5px"><span style="color:#3f9cf5">Generate code</span><span style="color:#8f8f8f">, or </span><span style="color:#3f9cf5">select a language</span></div>
<div class="a code it" style="left:626px;top:883.5px;color:#8f8f8f">(Ctrl+K M). Start typing to dismiss</div>
<div class="a code it" style="left:626px;top:907.5px"><span style="color:#8f8f8f">or </span><span style="color:#3f9cf5">don't show</span><span style="color:#8f8f8f"> this again.</span></div>
<svg class="a" style="left:992px;top:816px" width="12" height="12" viewBox="0 0 12 12"><circle cx="6" cy="6" r="4.2" fill="none" stroke="#6f6f6f" stroke-width="1.6"/></svg>
<div class="a code" style="left:1010px;top:813px;color:#d4d4d4;font-size:14.9px">PS C:\xampp\htdocs\aretion&gt;</div>
<div class="a" style="left:1754px;top:810px;width:1px;height:242px;background:#0e0e0e"></div>
<div class="a" style="left:1754px;top:810px;width:18px;height:1px;background:#0e0e0e"></div>
<div class="a" style="left:1755px;top:811px;width:5px;height:8px;background:#5f5f5f"></div>
<div class="a" style="left:1772px;top:803px;width:1px;height:249px;background:#2b2b2b"></div>
<div class="a" style="left:1772px;top:803px;width:148px;height:27px;background:#2d2d31;border-left:1px solid #0078d4;box-sizing:border-box"></div>
<svg class="a" style="left:1786px;top:808px" width="19" height="19" viewBox="0 0 19 19"><rect x="1.2" y="1.8" width="16.6" height="15.4" rx="2.5" fill="none" stroke="#cccccc" stroke-width="1.4"/><path d="M4.5 6l3.5 3.5-3.5 3.5M9.5 13.5h5" fill="none" stroke="#cccccc" stroke-width="1.4"/></svg>
<div class="a t" style="left:1809px;top:808px;font-size:16.25px;color:#cccccc">powershell</div>
<div class="a" style="left:0;top:1053px;width:1920px;height:27px;background:#181818;border-top:1px solid #2b2b2b"></div>
<div class="a" style="left:1252px;top:1054px;width:125px;height:26px;background:#3a3d41"></div>
<svg class="a" style="left:12px;top:1059px" width="16" height="16" viewBox="0 0 16 16"><path d="M2 6L7 10.5L2 15M14 1.8L9 6.4L14 11" fill="none" stroke="#cccccc" stroke-width="1.4"/></svg><svg class="a" style="left:51px;top:1057px" width="20" height="20" viewBox="0 0 20 20"><circle cx="4.5" cy="3.5" r="2" fill="none" stroke="#cccccc" stroke-width="1.3"/><circle cx="4.5" cy="16" r="2" fill="none" stroke="#cccccc" stroke-width="1.3"/><path d="M4.5 5.5v8.5" stroke="#cccccc" stroke-width="1.3"/><path d="M10 9v-1.5a2.2 2.2 0 0 1 4.4 0V9" fill="none" stroke="#cccccc" stroke-width="1.3"/><circle cx="12.5" cy="14.5" r="4.3" fill="#cccccc"/><path d="M12.5 12v5M10.3 13.3l4.4 2.4M14.7 13.3l-4.4 2.4" stroke="#181818" stroke-width="1"/></svg><div class="a t sbt" style="left:74px;top:1058px;color:#cccccc;transform:scaleX(0.9595);transform-origin:left;">ks*</div><svg class="a" style="left:103px;top:1058px" width="18" height="18" viewBox="0 0 18 18"><path d="M4 12.5A5.5 5.5 0 0 1 11 3.5M14 5.5A5.5 5.5 0 0 1 7 14.5" fill="none" stroke="#cccccc" stroke-width="1.3"/><path d="M9.5 1.5l2 2-2 2M8.5 12.5l-2 2 2 2" fill="none" stroke="#cccccc" stroke-width="1.3"/></svg><svg class="a" style="left:143px;top:1059px" width="18" height="16" viewBox="0 0 18 16"><path d="M6 1.5H2v13h4" fill="none" stroke="#cccccc" stroke-width="1.3"/><path d="M16 8H6M9.5 4.5L6 8l3.5 3.5" fill="none" stroke="#cccccc" stroke-width="1.3"/></svg><div class="a t sbt" style="left:165px;top:1058px;color:#cccccc;transform:scaleX(1.0123);transform-origin:left;">Sign in to Bitbucket</div><svg class="a" style="left:316px;top:1059px" width="16" height="16" viewBox="0 0 16 16"><circle cx="8" cy="8" r="6.6" fill="none" stroke="#cccccc" stroke-width="1.2"/><path d="M5.5 5.5l5 5M10.5 5.5l-5 5" stroke="#cccccc" stroke-width="1.2"/></svg><div class="a t sbt" style="left:338px;top:1058px;color:#cccccc;">0</div><svg class="a" style="left:351px;top:1058px" width="18" height="17" viewBox="0 0 18 17"><path d="M9 1.5L16.5 15h-15z" fill="none" stroke="#cccccc" stroke-width="1.3" stroke-linejoin="round"/><path d="M9 6v4.5M9 12v1.3" stroke="#cccccc" stroke-width="1.3"/></svg><div class="a t sbt" style="left:376px;top:1058px;color:#cccccc;">0</div><svg class="a" style="left:406px;top:1058px" width="14" height="18" viewBox="0 0 14 18"><path d="M8 1L3 10h4l-1.5 7L11 7.5H7z" fill="#f0783c"/></svg><div class="a t sbt" style="left:428px;top:1058px;color:#cccccc;transform:scaleX(0.9400);transform-origin:left;">BLACKBOX Agent</div><div class="a t sbt" style="left:564px;top:1058px;color:#cccccc;transform:scaleX(0.9812);transform-origin:left;">Open Website</div><div class="a t sbt" style="left:677px;top:1058px;color:#cccccc;transform:scaleX(0.9814);transform-origin:left;">Generate Commit Message</div><div class="a t sbt" style="left:915px;top:1058px;color:#cccccc;transform:scaleX(0.9581);transform-origin:left;">Ln 37, Col 5</div><div class="a t sbt" style="left:1012px;top:1058px;color:#cccccc;transform:scaleX(0.9218);transform-origin:left;">Spaces: 4</div><div class="a t sbt" style="left:1093px;top:1058px;color:#cccccc;transform:scaleX(0.9412);transform-origin:left;">UTF-8</div><div class="a t sbt" style="left:1153px;top:1058px;color:#cccccc;transform:scaleX(0.8278);transform-origin:left;">LF</div><svg class="a" style="left:1188px;top:1058px" width="20" height="18" viewBox="0 0 20 18"><path d="M5 2C3 2 3 3 3 5v2c0 1-1 2-2 2 1 0 2 1 2 2v2c0 2 0 3 2 3" fill="none" stroke="#cccccc" stroke-width="1.2"/><circle cx="13" cy="13" r="3" fill="none" stroke="#cccccc" stroke-width="1.2"/><path d="M13 2c2 0 2 1 2 3v3" fill="none" stroke="#cccccc" stroke-width="1.2"/></svg><div class="a t sbt" style="left:1215px;top:1058px;color:#cccccc;transform:scaleX(0.9240);transform-origin:left;">PHP</div><svg class="a" style="left:1261px;top:1057px" width="22" height="18" viewBox="0 0 22 18"><circle cx="6.2" cy="5.2" r="3.4" fill="none" stroke="#cccccc" stroke-width="2"/><circle cx="14.8" cy="5.2" r="3.4" fill="none" stroke="#cccccc" stroke-width="2"/><path d="M1.6 11C1.6 9.2 2.6 8.4 4.2 8.6H16.8C18.4 8.4 19.4 9.2 19.4 11C19.4 15.2 15.6 17.3 10.5 17.3C5.4 17.3 1.6 15.2 1.6 11Z" fill="#cccccc"/><rect x="7.6" y="10.8" width="1.8" height="3.6" fill="#3a3d41"/><rect x="11.6" y="10.8" width="1.8" height="3.6" fill="#3a3d41"/></svg><div class="a t sbt" style="left:1286px;top:1058px;color:#cccccc;transform:scaleX(0.9773);transform-origin:left;">Finish Setup</div><svg class="a" style="left:1386px;top:1059px" width="20" height="16" viewBox="0 0 20 16"><path d="M4 2.5a8 8 0 0 0 0 11M16 2.5a8 8 0 0 1 0 11M6.8 5a4.5 4.5 0 0 0 0 6M13.2 5a4.5 4.5 0 0 1 0 6" fill="none" stroke="#cccccc" stroke-width="1.3"/><circle cx="10" cy="8" r="1.3" fill="#cccccc"/></svg><div class="a t sbt" style="left:1410px;top:1058px;color:#cccccc;transform:scaleX(0.9671);transform-origin:left;">Go Live</div><svg class="a" style="left:1484px;top:1058px" width="14" height="18" viewBox="0 0 14 18"><path d="M8 1L3 10h4l-1.5 7L11 7.5H7z" fill="#f0783c"/></svg><div class="a t sbt" style="left:1504px;top:1058px;color:#cccccc;transform:scaleX(0.9771);transform-origin:left;">AI Code Chat</div><svg class="a" style="left:1611px;top:1059px" width="17" height="17" viewBox="0 0 17 17"><circle cx="8.5" cy="8.5" r="7" fill="none" stroke="#cccccc" stroke-width="1.3"/><path d="M6.5 5v7l5.5-3.5z" fill="none" stroke="#cccccc" stroke-width="1.2"/></svg><div class="a t sbt" style="left:1636px;top:1058px;color:#cccccc;transform:scaleX(0.9671);transform-origin:left;">Go Live</div><svg class="a" style="left:1704px;top:1059px" width="20" height="16" viewBox="0 0 20 16"><path d="M1.5 9l3.5 3.5 7.5-8M7.5 12.5l8-8M11 12.5l7-8" fill="none" stroke="#cccccc" stroke-width="1.3"/></svg><div class="a t sbt" style="left:1728px;top:1058px;color:#cccccc;transform:scaleX(1.0794);transform-origin:left;">phpfmt</div><svg class="a" style="left:1798px;top:1059px" width="17" height="17" viewBox="0 0 17 17"><circle cx="8.5" cy="8.5" r="7" fill="none" stroke="#cccccc" stroke-width="1.3"/><path d="M3.5 13.5l10-10" stroke="#cccccc" stroke-width="1.3"/></svg><div class="a t sbt" style="left:1821px;top:1058px;color:#cccccc;transform:scaleX(1.0132);transform-origin:left;">Prettier</div><svg class="a" style="left:1890px;top:1058px" width="18" height="18" viewBox="0 0 18 18"><path d="M9 2a4.5 4.5 0 0 0-4.5 4.5v4L3 13h12l-1.5-2.5v-4A4.5 4.5 0 0 0 9 2z" fill="none" stroke="#cccccc" stroke-width="1.3" stroke-linejoin="round"/><path d="M7 15a2 2 0 0 0 4 0" fill="none" stroke="#cccccc" stroke-width="1.3"/></svg>
</body></html>
